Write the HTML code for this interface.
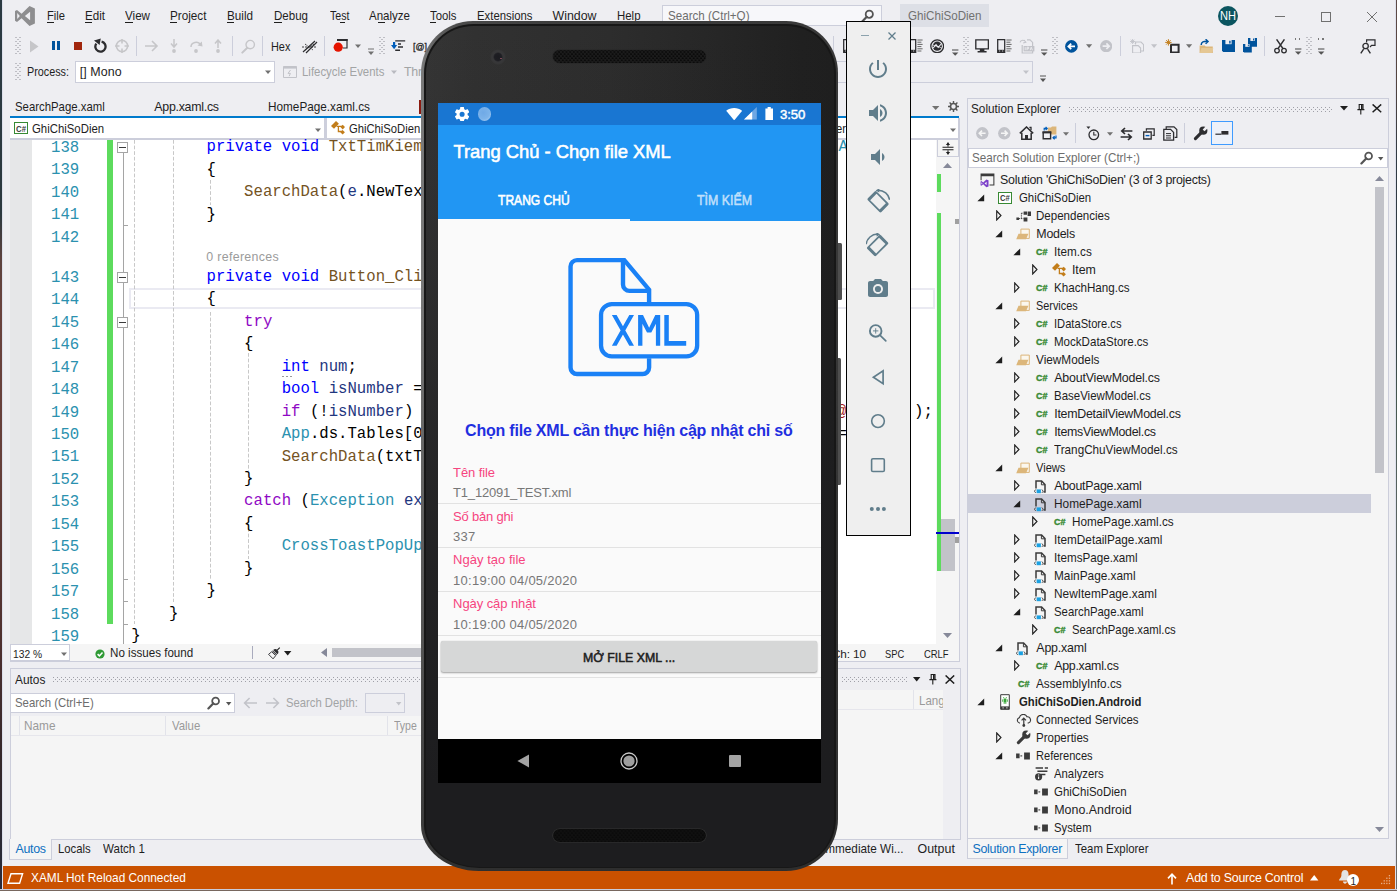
<!DOCTYPE html>
<html><head><meta charset="utf-8"><title>VS</title><style>
html,body{margin:0;padding:0}
body{width:1397px;height:891px;overflow:hidden;position:relative;background:#EEEEF2;font-family:"Liberation Sans",sans-serif;}
#r,#r div,#r span,#r svg{position:absolute}
#r{left:0;top:0;width:1397px;height:891px;overflow:hidden}
#r span{white-space:pre}
#r div{box-sizing:border-box}
</style></head><body><div id="r">
<svg style="left:14px;top:5px;" width="22" height="22" viewBox="0 0 22 22"><path d="M15.5 1.1 L20.9 3.4 V18.6 L15.5 20.9 L7.6 13.3 L3 16.9 L1 15.8 V6.1 L3 5.05 L7.6 8.7 Z M16.1 6.85 L10.9 11 L16.1 15.3 Z M3.2 8.1 V14 L5.85 11 Z" fill="#8E8E90" fill-rule="evenodd"/></svg>
<span style="left:47px;top:10.00px;font-size:12.4px;line-height:12.4px;color:#1E1E1E;transform:scaleX(0.9014);transform-origin:0 0;">File</span>
<div style="left:47px;top:22px;width:7px;height:1px;background:#1E1E1E;"></div>
<span style="left:84.5px;top:10.00px;font-size:12.4px;line-height:12.4px;color:#1E1E1E;transform:scaleX(0.9364);transform-origin:0 0;">Edit</span>
<div style="left:84.5px;top:22px;width:7px;height:1px;background:#1E1E1E;"></div>
<span style="left:124.5px;top:10.00px;font-size:12.4px;line-height:12.4px;color:#1E1E1E;transform:scaleX(0.9384);transform-origin:0 0;">View</span>
<div style="left:124.5px;top:22px;width:8px;height:1px;background:#1E1E1E;"></div>
<span style="left:170px;top:10.00px;font-size:12.4px;line-height:12.4px;color:#1E1E1E;transform:scaleX(0.9461);transform-origin:0 0;">Project</span>
<div style="left:170px;top:22px;width:7px;height:1px;background:#1E1E1E;"></div>
<span style="left:227px;top:10.00px;font-size:12.4px;line-height:12.4px;color:#1E1E1E;transform:scaleX(0.9433);transform-origin:0 0;">Build</span>
<div style="left:227px;top:22px;width:7px;height:1px;background:#1E1E1E;"></div>
<span style="left:273.5px;top:10.00px;font-size:12.4px;line-height:12.4px;color:#1E1E1E;transform:scaleX(0.9311);transform-origin:0 0;">Debug</span>
<div style="left:273.5px;top:22px;width:8px;height:1px;background:#1E1E1E;"></div>
<span style="left:329.5px;top:10.00px;font-size:12.4px;line-height:12.4px;color:#1E1E1E;transform:scaleX(0.8577);transform-origin:0 0;">Test</span>
<div style="left:340px;top:22px;width:5px;height:1px;background:#1E1E1E;"></div>
<span style="left:369px;top:10.00px;font-size:12.4px;line-height:12.4px;color:#1E1E1E;transform:scaleX(0.9298);transform-origin:0 0;">Analyze</span>
<div style="left:377.5px;top:22px;width:7px;height:1px;background:#1E1E1E;"></div>
<span style="left:430px;top:10.00px;font-size:12.4px;line-height:12.4px;color:#1E1E1E;transform:scaleX(0.9158);transform-origin:0 0;">Tools</span>
<div style="left:430px;top:22px;width:6px;height:1px;background:#1E1E1E;"></div>
<span style="left:477px;top:10.00px;font-size:12.4px;line-height:12.4px;color:#1E1E1E;transform:scaleX(0.9155);transform-origin:0 0;">Extensions</span>
<span style="left:552.5px;top:10.00px;font-size:12.4px;line-height:12.4px;color:#1E1E1E;letter-spacing:-0.016px;">Window</span>
<span style="left:617px;top:10.00px;font-size:12.4px;line-height:12.4px;color:#1E1E1E;transform:scaleX(0.9221);transform-origin:0 0;">Help</span>
<div style="left:662px;top:5px;width:220px;height:21px;background:#F7F7FA;border:1px solid #CCCEDB;"></div>
<span style="left:668px;top:10.00px;font-size:12.4px;line-height:12.4px;color:#6D6D6D;transform:scaleX(0.9356);transform-origin:0 0;">Search (Ctrl+Q)</span>
<svg style="left:860px;top:9px;" width="15" height="15" viewBox="0 0 15 15"><circle cx="9.3" cy="5.2" r="3.6" fill="none" stroke="#555" stroke-width="1.8"/><path d="M6.8 7.8 L1.5 13.2" stroke="#555" stroke-width="2.2" stroke-linecap="round"/></svg>
<div style="left:899.5px;top:4px;width:89.5px;height:23px;background:#DDDFE6;"></div>
<span style="left:907.5px;top:10.00px;font-size:12.4px;line-height:12.4px;color:#717171;transform:scaleX(0.9361);transform-origin:0 0;">GhiChiSoDien</span>
<div style="left:1218px;top:5.7px;width:20px;height:20px;background:#0B5560;border-radius:50%;"></div>
<span style="left:1220px;top:10.00px;font-size:12.6px;line-height:12.6px;color:#FFFFFF;transform:scaleX(0.8790);transform-origin:0 0;">NH</span>
<div style="left:1275px;top:16px;width:10px;height:1px;background:#707070;"></div>
<div style="left:1321px;top:12px;width:10px;height:10px;background:transparent;border:1px solid #707070;"></div>
<svg style="left:1366px;top:11px;" width="12" height="12" viewBox="0 0 12 12"><path d="M1 1 L11 11 M11 1 L1 11" stroke="#707070" stroke-width="1"/></svg>
<svg style="left:15px;top:37px;" width="6" height="18" viewBox="0 0 6 18"><rect x="0.5" y="0" width="1" height="1" fill="#8E8E96"/><rect x="4.5" y="0" width="1" height="1" fill="#8E8E96"/><rect x="2.5" y="2" width="1" height="1" fill="#8E8E96"/><rect x="0.5" y="4" width="1" height="1" fill="#8E8E96"/><rect x="4.5" y="4" width="1" height="1" fill="#8E8E96"/><rect x="2.5" y="6" width="1" height="1" fill="#8E8E96"/><rect x="0.5" y="8" width="1" height="1" fill="#8E8E96"/><rect x="4.5" y="8" width="1" height="1" fill="#8E8E96"/><rect x="2.5" y="10" width="1" height="1" fill="#8E8E96"/><rect x="0.5" y="12" width="1" height="1" fill="#8E8E96"/><rect x="4.5" y="12" width="1" height="1" fill="#8E8E96"/><rect x="2.5" y="14" width="1" height="1" fill="#8E8E96"/><rect x="0.5" y="16" width="1" height="1" fill="#8E8E96"/><rect x="4.5" y="16" width="1" height="1" fill="#8E8E96"/></svg>
<svg style="left:29px;top:40px;" width="11" height="13" viewBox="0 0 11 13"><path d="M1 0.5 L9.5 6.5 L1 12.5 Z" fill="#C6C6C9"/></svg>
<div style="left:52px;top:41px;width:3px;height:9px;background:#00539C;"></div>
<div style="left:57px;top:41px;width:3px;height:9px;background:#00539C;"></div>
<div style="left:74px;top:42px;width:8px;height:8px;background:#A1260D;"></div>
<svg style="left:93px;top:38px;" width="14" height="16" viewBox="0 0 14 16"><path d="M3.3 5.6 A5.1 5.1 0 1 0 8.6 3.6" fill="none" stroke="#2D2D30" stroke-width="2.3"/><path d="M1 2.4 L7.8 0.4 L6.6 7 Z" fill="#2D2D30"/></svg>
<svg style="left:115px;top:39px;" width="14" height="14" viewBox="0 0 14 14"><circle cx="7" cy="7" r="5.6" fill="none" stroke="#C6C6C9" stroke-width="1.6"/><path d="M7 0 V4.5 M7 9.5 V14 M0 7 H4.5 M9.5 7 H14" stroke="#C6C6C9" stroke-width="1.6"/></svg>
<div style="left:136px;top:36px;width:1px;height:20px;background:#CCCEDB;"></div>
<svg style="left:144px;top:40px;" width="15" height="12" viewBox="0 0 15 12"><path d="M1 6 H13 M8 1 L13 6 L8 11" fill="none" stroke="#C6C6C9" stroke-width="1.6"/></svg>
<svg style="left:169px;top:39px;" width="10" height="15" viewBox="0 0 10 15"><path d="M5 0 V7 M2 4.5 L5 8 L8 4.5" fill="none" stroke="#C6C6C9" stroke-width="1.5"/><circle cx="5" cy="12" r="1.9" fill="#C6C6C9"/></svg>
<svg style="left:189px;top:39px;" width="14" height="15" viewBox="0 0 14 15"><path d="M2 8 A5 4.6 0 0 1 11.5 6" fill="none" stroke="#C6C6C9" stroke-width="1.5"/><path d="M8.5 6.5 L13.5 7.5 L12.8 2.5 Z" fill="#C6C6C9"/><circle cx="7" cy="12" r="1.9" fill="#C6C6C9"/></svg>
<svg style="left:213px;top:39px;" width="10" height="15" viewBox="0 0 10 15"><path d="M5 9 V1.5 M2 4.5 L5 1 L8 4.5" fill="none" stroke="#C6C6C9" stroke-width="1.5"/><circle cx="5" cy="12" r="1.9" fill="#C6C6C9"/></svg>
<div style="left:232px;top:36px;width:1px;height:20px;background:#CCCEDB;"></div>
<svg style="left:241px;top:39px;" width="15" height="15" viewBox="0 0 15 15"><circle cx="9.2" cy="5.6" r="4.2" fill="none" stroke="#C6C6C9" stroke-width="1.4"/><path d="M6.3 8.8 L1.3 13.6" stroke="#C6C6C9" stroke-width="2" stroke-linecap="round"/></svg>
<div style="left:262px;top:36px;width:1px;height:20px;background:#CCCEDB;"></div>
<span style="left:270.6px;top:41.00px;font-size:12.4px;line-height:12.4px;color:#1E1E1E;transform:scaleX(0.8799);transform-origin:0 0;">Hex</span>
<svg style="left:301px;top:39px;" width="17" height="15" viewBox="0 0 17 15"><path d="M2 13 L14 2 M5 14 L16 3" stroke="#2D2D30" stroke-width="1.2"/><path d="M1 8 H15 M4 5 L12 11 M4 11 L13 5" stroke="#2D2D30" stroke-width="0.9" stroke-dasharray="2 1"/></svg>
<div style="left:324px;top:36px;width:1px;height:20px;background:#CCCEDB;"></div>
<svg style="left:333px;top:38px;" width="16" height="14" viewBox="0 0 16 14"><path d="M4 1.5 H14 V10 H10" fill="none" stroke="#2D2D30" stroke-width="1.2"/><path d="M4 1 H14.6 V3 H4 Z" fill="#2D2D30"/><circle cx="5.2" cy="9.2" r="4.6" fill="#E51400"/></svg>
<svg style="left:355px;top:44px;" width="7" height="5" viewBox="0 0 7 5"><path d="M0 0.5 H6 L3 4 Z" fill="#717171"/></svg>
<svg style="left:368px;top:48px;" width="7" height="8" viewBox="0 0 7 8"><path d="M0 1 H6" stroke="#717171" stroke-width="1"/><path d="M0 3.5 H6 L3 7 Z" fill="#717171"/></svg>
<svg style="left:379px;top:37px;" width="6" height="18" viewBox="0 0 6 18"><rect x="0.5" y="0" width="1" height="1" fill="#8E8E96"/><rect x="4.5" y="0" width="1" height="1" fill="#8E8E96"/><rect x="2.5" y="2" width="1" height="1" fill="#8E8E96"/><rect x="0.5" y="4" width="1" height="1" fill="#8E8E96"/><rect x="4.5" y="4" width="1" height="1" fill="#8E8E96"/><rect x="2.5" y="6" width="1" height="1" fill="#8E8E96"/><rect x="0.5" y="8" width="1" height="1" fill="#8E8E96"/><rect x="4.5" y="8" width="1" height="1" fill="#8E8E96"/><rect x="2.5" y="10" width="1" height="1" fill="#8E8E96"/><rect x="0.5" y="12" width="1" height="1" fill="#8E8E96"/><rect x="4.5" y="12" width="1" height="1" fill="#8E8E96"/><rect x="2.5" y="14" width="1" height="1" fill="#8E8E96"/><rect x="0.5" y="16" width="1" height="1" fill="#8E8E96"/><rect x="4.5" y="16" width="1" height="1" fill="#8E8E96"/></svg>
<svg style="left:390px;top:39px;" width="16" height="13" viewBox="0 0 16 13"><path d="M4.1 3 V7" stroke="#005DBA" stroke-width="2.2"/><path d="M1 6 L4.1 10.2 L7.2 6 Z" fill="#005DBA"/><path d="M5.2 1.9 H15.2 M8 5 H11 M8 8 H13 M5.2 11.2 H10" stroke="#2D2D30" stroke-width="1.4"/></svg>
<span style="left:413px;top:42.00px;font-size:9.4px;line-height:9.4px;color:#1E1E1E;transform:scaleX(0.9502);transform-origin:0 0;-webkit-text-stroke:0.3px #1E1E1E;">[@]</span>
<svg style="left:15px;top:63px;" width="6" height="18" viewBox="0 0 6 18"><rect x="0.5" y="0" width="1" height="1" fill="#8E8E96"/><rect x="4.5" y="0" width="1" height="1" fill="#8E8E96"/><rect x="2.5" y="2" width="1" height="1" fill="#8E8E96"/><rect x="0.5" y="4" width="1" height="1" fill="#8E8E96"/><rect x="4.5" y="4" width="1" height="1" fill="#8E8E96"/><rect x="2.5" y="6" width="1" height="1" fill="#8E8E96"/><rect x="0.5" y="8" width="1" height="1" fill="#8E8E96"/><rect x="4.5" y="8" width="1" height="1" fill="#8E8E96"/><rect x="2.5" y="10" width="1" height="1" fill="#8E8E96"/><rect x="0.5" y="12" width="1" height="1" fill="#8E8E96"/><rect x="4.5" y="12" width="1" height="1" fill="#8E8E96"/><rect x="2.5" y="14" width="1" height="1" fill="#8E8E96"/><rect x="0.5" y="16" width="1" height="1" fill="#8E8E96"/><rect x="4.5" y="16" width="1" height="1" fill="#8E8E96"/></svg>
<span style="left:26.5px;top:66.00px;font-size:12.4px;line-height:12.4px;color:#1E1E1E;transform:scaleX(0.8713);transform-origin:0 0;">Process:</span>
<div style="left:75px;top:61px;width:199.5px;height:21.5px;background:#FFFFFF;border:1px solid #CCCEDB;"></div>
<span style="left:79.8px;top:66.00px;font-size:12.4px;line-height:12.4px;color:#1E1E1E;letter-spacing:0.079px;">[] Mono</span>
<svg style="left:264.5px;top:70px;" width="7" height="5" viewBox="0 0 7 5"><path d="M0 0.5 H6 L3 4 Z" fill="#717171"/></svg>
<svg style="left:283px;top:66px;" width="14" height="12" viewBox="0 0 14 12"><path d="M0.5 0.5 H13.5 V11.5 H0.5 Z" fill="none" stroke="#C2C3C9" stroke-width="1"/><path d="M0.5 0.5 H13.5 V2.6 H0.5 Z" fill="#C2C3C9"/><path d="M7.5 4 L5 7.4 H7.4 L6.2 10.2" fill="none" stroke="#C2C3C9" stroke-width="1"/></svg>
<span style="left:302.4px;top:66.00px;font-size:12.4px;line-height:12.4px;color:#A2A4A5;transform:scaleX(0.9203);transform-origin:0 0;">Lifecycle Events</span>
<svg style="left:391px;top:70px;" width="7" height="5" viewBox="0 0 7 5"><path d="M0 0.5 H6 L3 4 Z" fill="#B9BAC0"/></svg>
<span style="left:404px;top:66.00px;font-size:12.4px;line-height:12.4px;color:#A2A4A5;letter-spacing:-0.284px;">Thread:</span>
<div style="left:700px;top:61.2px;width:333px;height:21.6px;background:#EEEEF2;border:1px solid #CCCEDB;"></div>
<svg style="left:1023px;top:70.2px;" width="7" height="5" viewBox="0 0 7 5"><path d="M0 0.5 H6 L3 4 Z" fill="#C2C3C9"/></svg>
<svg style="left:1040px;top:74.6px;" width="7" height="8" viewBox="0 0 7 8"><path d="M0 1 H6" stroke="#555" stroke-width="1"/><path d="M0 3.5 H6 L3 7 Z" fill="#555"/></svg>
<svg style="left:842.6px;top:39px;" width="15" height="14" viewBox="0 0 15 14"><path d="M0.7 0.7 H7.7 V13.3 H0.7 Z" fill="none" stroke="#2D2D30" stroke-width="1.25"/><path d="M0.7 10.8 H7.7 V13.3 H0.7 Z" fill="#2D2D30"/><path d="M2 12 H3.2 M5 12 H6.2" stroke="#EEEEF2" stroke-width="0.8"/><path d="M9.4 1 H14.6 M9.4 3.2 H13.4 M9.4 5.4 H14.6 M9.4 7.6 H13.4 M9.4 9.8 H14.6 M9.4 12 H13.4" stroke="#555" stroke-width="0.9"/></svg>
<div style="left:833px;top:36px;width:1px;height:20px;background:#CCCEDB;"></div>
<svg style="left:907.5px;top:39px;" width="15" height="14" viewBox="0 0 15 14"><path d="M0.7 0.7 H7.7 V13.3 H0.7 Z" fill="none" stroke="#2D2D30" stroke-width="1.25"/><path d="M0.7 10.8 H7.7 V13.3 H0.7 Z" fill="#2D2D30"/><path d="M2 12 H3.2 M5 12 H6.2" stroke="#EEEEF2" stroke-width="0.8"/><path d="M9.4 1 H14.6 M9.4 3.2 H13.4 M9.4 5.4 H14.6 M9.4 7.6 H13.4 M9.4 9.8 H14.6 M9.4 12 H13.4" stroke="#555" stroke-width="0.9"/></svg>
<svg style="left:930px;top:39px;" width="14.4" height="14.4" viewBox="0 0 14.4 14.4"><circle cx="7.2" cy="7.2" r="6.4" fill="none" stroke="#2D2D30" stroke-width="1.3"/><circle cx="7.2" cy="7.2" r="4.6" fill="#2D2D30"/><path d="M3.2 9 L6 5.6 L8.2 8.4 L11.2 5" fill="none" stroke="#EEEEF2" stroke-width="1.1"/><path d="M2.8 6 L11.6 8.8" stroke="#EEEEF2" stroke-width="0.7"/></svg>
<svg style="left:952px;top:48.6px;" width="7" height="8" viewBox="0 0 7 8"><path d="M0 1 H6.4" stroke="#555" stroke-width="1.1"/><path d="M0 3.4 H6.4 L3.2 6.8 Z" fill="#555"/></svg>
<svg style="left:963px;top:37px;" width="6" height="18" viewBox="0 0 6 18"><rect x="0.5" y="0" width="1" height="1" fill="#8E8E96"/><rect x="4.5" y="0" width="1" height="1" fill="#8E8E96"/><rect x="2.5" y="2" width="1" height="1" fill="#8E8E96"/><rect x="0.5" y="4" width="1" height="1" fill="#8E8E96"/><rect x="4.5" y="4" width="1" height="1" fill="#8E8E96"/><rect x="2.5" y="6" width="1" height="1" fill="#8E8E96"/><rect x="0.5" y="8" width="1" height="1" fill="#8E8E96"/><rect x="4.5" y="8" width="1" height="1" fill="#8E8E96"/><rect x="2.5" y="10" width="1" height="1" fill="#8E8E96"/><rect x="0.5" y="12" width="1" height="1" fill="#8E8E96"/><rect x="4.5" y="12" width="1" height="1" fill="#8E8E96"/><rect x="2.5" y="14" width="1" height="1" fill="#8E8E96"/><rect x="0.5" y="16" width="1" height="1" fill="#8E8E96"/><rect x="4.5" y="16" width="1" height="1" fill="#8E8E96"/></svg>
<svg style="left:975px;top:39px;" width="14.4" height="14" viewBox="0 0 14.4 14"><path d="M0.8 0.8 H13.4 V9.9 H0.8 Z" fill="none" stroke="#2D2D30" stroke-width="1.35"/><path d="M4.8 10 H9.4 V12 H4.8 Z M2.6 12 H11.6 V13.6 H2.6 Z" fill="#2D2D30"/></svg>
<svg style="left:997px;top:39px;" width="15" height="14" viewBox="0 0 15 14"><path d="M0.7 0.7 H7.7 V13.3 H0.7 Z" fill="none" stroke="#2D2D30" stroke-width="1.25"/><path d="M0.7 10.8 H7.7 V13.3 H0.7 Z" fill="#2D2D30"/><path d="M2 12 H3.2 M5 12 H6.2" stroke="#EEEEF2" stroke-width="0.8"/><path d="M9.4 1 H14.6 M9.4 3.2 H13.4 M9.4 5.4 H14.6 M9.4 7.6 H13.4 M9.4 9.8 H14.6 M9.4 12 H13.4" stroke="#555" stroke-width="0.9"/></svg>
<svg style="left:1019px;top:38.6px;" width="16" height="15" viewBox="0 0 16 15"><path d="M3.2 6 V14 H13.6 V3.4 L11 0.8 H8" fill="none" stroke="#C2C3C9" stroke-width="1.2"/><path d="M1 3.4 A3 3 0 0 1 6.6 3 M5 1 L6.8 3.2 L4.2 4" fill="none" stroke="#C2C3C9" stroke-width="1.1"/><path d="M4.6 7 H15.4 V12.4 H4.6 Z" fill="#C2C3C9"/><path d="M6.2 8.2 V11.2 M8 11.2 V8.2 H9.6 V9.8 H8 M11.2 11.2 L12.2 8.2 L13.4 11.2" fill="none" stroke="#EEEEF2" stroke-width="0.9"/></svg>
<svg style="left:1040.7px;top:48.6px;" width="7" height="8" viewBox="0 0 7 8"><path d="M0 1 H6.4" stroke="#555" stroke-width="1.1"/><path d="M0 3.4 H6.4 L3.2 6.8 Z" fill="#555"/></svg>
<svg style="left:1052px;top:37px;" width="6" height="18" viewBox="0 0 6 18"><rect x="0.5" y="0" width="1" height="1" fill="#8E8E96"/><rect x="4.5" y="0" width="1" height="1" fill="#8E8E96"/><rect x="2.5" y="2" width="1" height="1" fill="#8E8E96"/><rect x="0.5" y="4" width="1" height="1" fill="#8E8E96"/><rect x="4.5" y="4" width="1" height="1" fill="#8E8E96"/><rect x="2.5" y="6" width="1" height="1" fill="#8E8E96"/><rect x="0.5" y="8" width="1" height="1" fill="#8E8E96"/><rect x="4.5" y="8" width="1" height="1" fill="#8E8E96"/><rect x="2.5" y="10" width="1" height="1" fill="#8E8E96"/><rect x="0.5" y="12" width="1" height="1" fill="#8E8E96"/><rect x="4.5" y="12" width="1" height="1" fill="#8E8E96"/><rect x="2.5" y="14" width="1" height="1" fill="#8E8E96"/><rect x="0.5" y="16" width="1" height="1" fill="#8E8E96"/><rect x="4.5" y="16" width="1" height="1" fill="#8E8E96"/></svg>
<svg style="left:1065.4px;top:39.6px;" width="13" height="13" viewBox="0 0 13 13"><circle cx="6.4" cy="6.4" r="6.3" fill="#00539C"/><path d="M10 6.4 H3.6 M6.2 3.6 L3.4 6.4 L6.2 9.2" fill="none" stroke="#FFFFFF" stroke-width="1.8"/></svg>
<svg style="left:1085.8px;top:44.2px;" width="7" height="5" viewBox="0 0 7 5"><path d="M0 0.3 H6.2 L3.1 3.9 Z" fill="#717171"/></svg>
<svg style="left:1099.8px;top:39.8px;" width="12.6" height="12.6" viewBox="0 0 12.6 12.6"><circle cx="6.2" cy="6.2" r="6.1" fill="#C2C3C9"/><path d="M2.6 6.2 H9 M6.4 3.4 L9.2 6.2 L6.4 9" fill="none" stroke="#EEEEF2" stroke-width="1.7"/></svg>
<div style="left:1120px;top:36px;width:1px;height:20px;background:#CCCEDB;"></div>
<svg style="left:1129.6px;top:38.6px;" width="14.4" height="14.6" viewBox="0 0 14.4 14.6"><path d="M5.6 5.6 V3 H11 L13.6 5.6 V12 H11" fill="none" stroke="#C2C3C9" stroke-width="1.1"/><path d="M2.6 6.6 H8.2 L10.6 9 V14 H2.6 Z" fill="none" stroke="#C2C3C9" stroke-width="1.1"/><path d="M2.6 0 V5 M0 2.5 H5.2 M0.8 0.7 L4.4 4.3 M4.4 0.7 L0.8 4.3" stroke="#C2C3C9" stroke-width="0.9"/></svg>
<svg style="left:1151px;top:44.2px;" width="7" height="5" viewBox="0 0 7 5"><path d="M0 0.3 H6.2 L3.1 3.9 Z" fill="#C2C3C9"/></svg>
<svg style="left:1164.6px;top:38.6px;" width="15" height="14.6" viewBox="0 0 15 14.6"><path d="M6 5.8 H13.6 V13.6 H6 Z" fill="none" stroke="#2D2D30" stroke-width="2"/><path d="M3.4 0.2 V6.6 M0.2 3.4 H6.6 M1.2 1.2 L5.6 5.6 M5.6 1.2 L1.2 5.6" stroke="#C27D1A" stroke-width="1"/></svg>
<svg style="left:1186px;top:44.2px;" width="7" height="5" viewBox="0 0 7 5"><path d="M0 0.3 H6.2 L3.1 3.9 Z" fill="#717171"/></svg>
<svg style="left:1198.6px;top:39px;" width="15" height="15" viewBox="0 0 15 15"><path d="M0.6 6.4 H5.6 L6.8 7.6 H13.8 V14 H0.6 Z" fill="#DCB67A"/><path d="M2.4 9 H14.4 L12.8 14 H0.8 Z" fill="#E8CFA0" opacity="0.7"/><path d="M2.2 6 C2.2 2.6 4.6 2.2 8.6 2.4 M6.6 0.2 L9 2.4 L6.6 4.8" fill="none" stroke="#00539C" stroke-width="1.5"/></svg>
<svg style="left:1221.6px;top:39.8px;" width="13.0" height="12.4" viewBox="0 0 13 12.4"><path d="M0 0 H13 V12.4 H1.6 L0 10.8 Z" fill="#00539C"/><path d="M3.4 0 H9.6 V4.2 H3.4 Z" fill="#EEEEF2"/><path d="M7.2 0.8 H8.6 V3.4 H7.2 Z" fill="#00539C"/></svg>
<svg style="left:1248.4px;top:38.2px;" width="9.1" height="8.7" viewBox="0 0 13 12.4"><path d="M0 0 H13 V12.4 H1.6 L0 10.8 Z" fill="#00539C"/><path d="M3.4 0 H9.6 V4.2 H3.4 Z" fill="#EEEEF2"/><path d="M7.2 0.8 H8.6 V3.4 H7.2 Z" fill="#00539C"/></svg>
<svg style="left:1243px;top:44.4px;" width="8.8" height="8.4" viewBox="0 0 13 12.4"><path d="M0 0 H13 V12.4 H1.6 L0 10.8 Z" fill="#00539C"/><path d="M3.4 0 H9.6 V4.2 H3.4 Z" fill="#EEEEF2"/><path d="M7.2 0.8 H8.6 V3.4 H7.2 Z" fill="#00539C"/></svg>
<div style="left:1264px;top:36px;width:1px;height:20px;background:#CCCEDB;"></div>
<svg style="left:1273.6px;top:38.8px;" width="13" height="15" viewBox="0 0 13 15"><path d="M2.6 0.4 L9 9.6 M10.4 0.4 L4 9.6" stroke="#2D2D30" stroke-width="1.5"/><circle cx="3" cy="11.6" r="2.3" fill="none" stroke="#2D2D30" stroke-width="1.3"/><circle cx="10" cy="11.6" r="2.3" fill="none" stroke="#2D2D30" stroke-width="1.3"/></svg>
<svg style="left:1294.6px;top:48.4px;" width="7" height="8" viewBox="0 0 7 8"><path d="M0 1 H6.4" stroke="#555" stroke-width="1.1"/><path d="M0 3.4 H6.4 L3.2 6.8 Z" fill="#555"/></svg>
<div style="left:1295.0px;top:38.4px;width:1.2px;height:1.6px;background:#777;"></div>
<div style="left:1299.1999999999998px;top:38.4px;width:1.2px;height:1.6px;background:#777;"></div>
<svg style="left:1305.8px;top:37px;" width="6" height="18" viewBox="0 0 6 18"><rect x="0.5" y="0" width="1" height="1" fill="#8E8E96"/><rect x="4.5" y="0" width="1" height="1" fill="#8E8E96"/><rect x="2.5" y="2" width="1" height="1" fill="#8E8E96"/><rect x="0.5" y="4" width="1" height="1" fill="#8E8E96"/><rect x="4.5" y="4" width="1" height="1" fill="#8E8E96"/><rect x="2.5" y="6" width="1" height="1" fill="#8E8E96"/><rect x="0.5" y="8" width="1" height="1" fill="#8E8E96"/><rect x="4.5" y="8" width="1" height="1" fill="#8E8E96"/><rect x="2.5" y="10" width="1" height="1" fill="#8E8E96"/><rect x="0.5" y="12" width="1" height="1" fill="#8E8E96"/><rect x="4.5" y="12" width="1" height="1" fill="#8E8E96"/><rect x="2.5" y="14" width="1" height="1" fill="#8E8E96"/><rect x="0.5" y="16" width="1" height="1" fill="#8E8E96"/><rect x="4.5" y="16" width="1" height="1" fill="#8E8E96"/></svg>
<svg style="left:1317.8px;top:48.4px;" width="7" height="8" viewBox="0 0 7 8"><path d="M0 1 H6.4" stroke="#555" stroke-width="1.1"/><path d="M0 3.4 H6.4 L3.2 6.8 Z" fill="#555"/></svg>
<div style="left:1318.2px;top:38.4px;width:1.2px;height:1.6px;background:#777;"></div>
<div style="left:1322.3999999999999px;top:38.4px;width:1.2px;height:1.6px;background:#777;"></div>
<svg style="left:1359.6px;top:38.6px;" width="16" height="15" viewBox="0 0 16 15"><path d="M6.6 3.6 V0.8 H15 V6.4 H11.6 L10 8" fill="none" stroke="#2D2D30" stroke-width="1.2"/><circle cx="5.6" cy="7" r="2.7" fill="none" stroke="#2D2D30" stroke-width="1.3"/><path d="M0.8 14.4 L3.6 10.2 M10.4 14.4 L7.6 10.2" stroke="#2D2D30" stroke-width="1.4"/></svg>
<span style="left:15px;top:101.00px;font-size:12.4px;line-height:12.4px;color:#1E1E1E;transform:scaleX(0.9171);transform-origin:0 0;">SearchPage.xaml</span>
<span style="left:154.3px;top:101.00px;font-size:12.4px;line-height:12.4px;color:#1E1E1E;letter-spacing:-0.278px;">App.xaml.cs</span>
<span style="left:268px;top:101.00px;font-size:12.4px;line-height:12.4px;color:#1E1E1E;transform:scaleX(0.9494);transform-origin:0 0;">HomePage.xaml.cs</span>
<div style="left:419.4px;top:100px;width:1.8px;height:14px;background:#8B1A10;"></div>
<svg style="left:931.5px;top:106px;" width="8" height="5" viewBox="0 0 8 5"><path d="M0 0 H7.4 L3.7 4 Z" fill="#717171"/></svg>
<svg style="left:947.5px;top:101px;" width="11" height="11" viewBox="0 0 11 11"><circle cx="5.5" cy="5.5" r="3" fill="none" stroke="#555" stroke-width="1.6"/><path d="M5.5 0 V2 M5.5 9 V11 M0 5.5 H2 M9 5.5 H11 M1.6 1.6 L3 3 M8 8 L9.4 9.4 M1.6 9.4 L3 8 M8 3 L9.4 1.6" stroke="#555" stroke-width="1.4"/></svg>
<div style="left:10px;top:116px;width:949px;height:2px;background:#007ACC;"></div>
<div style="left:10px;top:118px;width:949px;height:20.5px;background:#FFFFFF;"></div>
<div style="left:10px;top:138px;width:949px;height:1.6px;background:#CCCEDB;"></div>
<div style="left:323.6px;top:118px;width:3.8px;height:20px;background:#CDCFDC;"></div>
<div style="left:958px;top:118px;width:1.5px;height:21px;background:#CCCEDB;"></div>
<div style="left:14.2px;top:122.2px;width:14px;height:11.6px;background:#FFFFFF;border:1px solid #388A34;"></div>
<span style="left:16.4px;top:125.00px;font-size:8.6px;line-height:8.6px;color:#3A3A3A;font-weight:700;transform:scaleX(0.9091);transform-origin:0 0;">C#</span>
<span style="left:31.5px;top:123.00px;font-size:12.4px;line-height:12.4px;color:#1E1E1E;transform:scaleX(0.9183);transform-origin:0 0;">GhiChiSoDien</span>
<svg style="left:315.2px;top:127.6px;" width="7" height="5" viewBox="0 0 7 5"><path d="M0 0.5 H6 L3 4 Z" fill="#717171"/></svg>
<svg style="left:330px;top:120px;" width="16" height="16" viewBox="0 0 16 16"><path d="M1 5.9 L6 0.9 L8.9 3.8 L4 8.8 Z" fill="#C27D1A"/><path d="M6.6 6.3 H12.6 M8.4 6.3 V11.5 H12.6" fill="none" stroke="#C27D1A" stroke-width="1.3"/><path d="M10.4 7.1 L12.7 4.8 L15 7.1 L12.7 9.4 Z M10.3 12.3 L12.6 10 L14.9 12.3 L12.6 14.6 Z" fill="#C27D1A"/></svg>
<span style="left:349px;top:123.00px;font-size:12.4px;line-height:12.4px;color:#1E1E1E;transform:scaleX(0.9072);transform-origin:0 0;">GhiChiSoDien.Views.Sear</span>
<svg style="left:950px;top:127.5px;" width="7" height="5" viewBox="0 0 7 5"><path d="M0 0.5 H6 L3 4 Z" fill="#717171"/></svg>
<span style="left:836px;top:123.00px;font-size:12.4px;line-height:12.4px;color:#1E1E1E;transform:scaleX(0.9065);transform-origin:0 0;">er</span>
<div style="left:10px;top:139.5px;width:926px;height:504.5px;background:#FFFFFF;"></div>
<div style="left:10px;top:139.5px;width:22.3px;height:504.5px;background:#E6E7E8;"></div>
<div style="left:936px;top:139.5px;width:23px;height:504.5px;background:#F5F5F5;"></div>
<div style="left:959px;top:118px;width:1px;height:544px;background:#CCCEDB;"></div>
<div style="left:936.5px;top:139.5px;width:22.5px;height:17px;background:#F5F5F5;border:1px solid #CCCEDB;border-top:none;"></div>
<svg style="left:942px;top:142px;" width="12" height="13" viewBox="0 0 12 13"><path d="M6 0.5 V4.6 M6 8.4 V12.5 M0.5 5.2 H11.5 M0.5 7.8 H11.5" stroke="#1E1E1E" stroke-width="1.1"/><path d="M3.8 3 L6 0.4 L8.2 3 Z M3.8 10 L6 12.6 L8.2 10 Z" fill="#1E1E1E"/></svg>
<svg style="left:943px;top:163px;" width="9" height="5" viewBox="0 0 9 5"><path d="M0 5 L4.5 0 L9 5 Z" fill="#868999"/></svg>
<svg style="left:943px;top:633px;" width="9" height="5" viewBox="0 0 9 5"><path d="M0 0 L4.5 5 L9 0 Z" fill="#868999"/></svg>
<div style="left:937px;top:174px;width:4.2px;height:18px;background:#5DDB5D;"></div>
<div style="left:937px;top:213px;width:4.2px;height:358px;background:#5DDB5D;"></div>
<div style="left:941.2px;top:519px;width:13.4px;height:52px;background:#C2C3C9;"></div>
<div style="left:954.6px;top:537px;width:4.4px;height:5.6px;background:#A0A0A0;"></div>
<div style="left:936px;top:532px;width:23px;height:2px;background:#0000CD;"></div>
<div style="left:954.6px;top:218.6px;width:4.4px;height:5.6px;background:#A0A0A0;"></div>
<div style="left:107px;top:139.5px;width:6px;height:484.5px;background:#5DDB5D;"></div>
<span style="left:51px;top:141.00px;font-size:15.67px;line-height:15.67px;color:#2B91AF;font-family:'Liberation Mono', monospace;">138</span>
<span style="left:51px;top:163.00px;font-size:15.67px;line-height:15.67px;color:#2B91AF;font-family:'Liberation Mono', monospace;">139</span>
<span style="left:51px;top:186.00px;font-size:15.67px;line-height:15.67px;color:#2B91AF;font-family:'Liberation Mono', monospace;">140</span>
<span style="left:51px;top:208.00px;font-size:15.67px;line-height:15.67px;color:#2B91AF;font-family:'Liberation Mono', monospace;">141</span>
<span style="left:51px;top:231.00px;font-size:15.67px;line-height:15.67px;color:#2B91AF;font-family:'Liberation Mono', monospace;">142</span>
<span style="left:51px;top:271.00px;font-size:15.67px;line-height:15.67px;color:#2B91AF;font-family:'Liberation Mono', monospace;">143</span>
<span style="left:51px;top:293.00px;font-size:15.67px;line-height:15.67px;color:#2B91AF;font-family:'Liberation Mono', monospace;">144</span>
<span style="left:51px;top:316.00px;font-size:15.67px;line-height:15.67px;color:#2B91AF;font-family:'Liberation Mono', monospace;">145</span>
<span style="left:51px;top:338.00px;font-size:15.67px;line-height:15.67px;color:#2B91AF;font-family:'Liberation Mono', monospace;">146</span>
<span style="left:51px;top:361.00px;font-size:15.67px;line-height:15.67px;color:#2B91AF;font-family:'Liberation Mono', monospace;">147</span>
<span style="left:51px;top:383.00px;font-size:15.67px;line-height:15.67px;color:#2B91AF;font-family:'Liberation Mono', monospace;">148</span>
<span style="left:51px;top:406.00px;font-size:15.67px;line-height:15.67px;color:#2B91AF;font-family:'Liberation Mono', monospace;">149</span>
<span style="left:51px;top:428.00px;font-size:15.67px;line-height:15.67px;color:#2B91AF;font-family:'Liberation Mono', monospace;">150</span>
<span style="left:51px;top:450.00px;font-size:15.67px;line-height:15.67px;color:#2B91AF;font-family:'Liberation Mono', monospace;">151</span>
<span style="left:51px;top:473.00px;font-size:15.67px;line-height:15.67px;color:#2B91AF;font-family:'Liberation Mono', monospace;">152</span>
<span style="left:51px;top:495.00px;font-size:15.67px;line-height:15.67px;color:#2B91AF;font-family:'Liberation Mono', monospace;">153</span>
<span style="left:51px;top:518.00px;font-size:15.67px;line-height:15.67px;color:#2B91AF;font-family:'Liberation Mono', monospace;">154</span>
<span style="left:51px;top:540.00px;font-size:15.67px;line-height:15.67px;color:#2B91AF;font-family:'Liberation Mono', monospace;">155</span>
<span style="left:51px;top:563.00px;font-size:15.67px;line-height:15.67px;color:#2B91AF;font-family:'Liberation Mono', monospace;">156</span>
<span style="left:51px;top:585.00px;font-size:15.67px;line-height:15.67px;color:#2B91AF;font-family:'Liberation Mono', monospace;">157</span>
<span style="left:51px;top:608.00px;font-size:15.67px;line-height:15.67px;color:#2B91AF;font-family:'Liberation Mono', monospace;">158</span>
<span style="left:51px;top:630.00px;font-size:15.67px;line-height:15.67px;color:#2B91AF;font-family:'Liberation Mono', monospace;">159</span>
<div style="left:129px;top:288.3px;width:806px;height:20.6px;background:transparent;border:2px solid #EAEAF2;"></div>
<div style="left:122.6px;top:152px;width:1px;height:492px;background:#A5A5A5;"></div>
<div style="left:117px;top:142.2px;width:11px;height:11px;background:#FFFFFF;border:1px solid #A5A5A5;"></div>
<div style="left:119px;top:147.2px;width:7px;height:1px;background:#3B3B3B;"></div>
<div style="left:117px;top:272.0px;width:11px;height:11px;background:#FFFFFF;border:1px solid #A5A5A5;"></div>
<div style="left:119px;top:277.0px;width:7px;height:1px;background:#3B3B3B;"></div>
<div style="left:117px;top:316.9px;width:11px;height:11px;background:#FFFFFF;border:1px solid #A5A5A5;"></div>
<div style="left:119px;top:321.9px;width:7px;height:1px;background:#3B3B3B;"></div>
<div style="left:123px;top:224.5px;width:5px;height:1px;background:#A5A5A5;"></div>
<div style="left:123px;top:578.5px;width:5px;height:1px;background:#A5A5A5;"></div>
<div style="left:123px;top:601px;width:5px;height:1px;background:#A5A5A5;"></div>
<div style="left:123px;top:623.5px;width:5px;height:1px;background:#A5A5A5;"></div>
<div style="left:134px;top:139.5px;width:1px;height:484.5px;background:transparent;background-image:linear-gradient(#C8C8C8 60%,transparent 60%);background-size:1px 5.6px;"></div>
<div style="left:173px;top:139.5px;width:1px;height:462.5px;background:transparent;background-image:linear-gradient(#C8C8C8 60%,transparent 60%);background-size:1px 5.6px;"></div>
<div style="left:209.5px;top:180px;width:1px;height:25px;background:transparent;background-image:linear-gradient(#C8C8C8 60%,transparent 60%);background-size:1px 5.6px;"></div>
<div style="left:209.5px;top:312px;width:1px;height:268px;background:transparent;background-image:linear-gradient(#C8C8C8 60%,transparent 60%);background-size:1px 5.6px;"></div>
<div style="left:247.5px;top:353px;width:1px;height:118px;background:transparent;background-image:linear-gradient(#C8C8C8 60%,transparent 60%);background-size:1px 5.6px;"></div>
<div style="left:247.5px;top:528px;width:1px;height:31px;background:transparent;background-image:linear-gradient(#C8C8C8 60%,transparent 60%);background-size:1px 5.6px;"></div>
<span style="left:206.5px;top:140.00px;font-size:15.67px;line-height:15.67px;color:#0000FF;font-family:'Liberation Mono', monospace;">private</span>
<span style="left:281.7px;top:140.00px;font-size:15.67px;line-height:15.67px;color:#0000FF;font-family:'Liberation Mono', monospace;">void</span>
<span style="left:328.7px;top:140.00px;font-size:15.67px;line-height:15.67px;color:#74531F;font-family:'Liberation Mono', monospace;">TxtTimKiem_TextChanged</span>
<span style="left:206.5px;top:163.00px;font-size:15.67px;line-height:15.67px;color:#000000;font-family:'Liberation Mono', monospace;">{</span>
<span style="left:244.1px;top:185.00px;font-size:15.67px;line-height:15.67px;color:#74531F;font-family:'Liberation Mono', monospace;">SearchData</span>
<span style="left:338.1px;top:185.00px;font-size:15.67px;line-height:15.67px;color:#000000;font-family:'Liberation Mono', monospace;">(</span>
<span style="left:347.5px;top:185.00px;font-size:15.67px;line-height:15.67px;color:#1F377F;font-family:'Liberation Mono', monospace;">e</span>
<span style="left:356.9px;top:185.00px;font-size:15.67px;line-height:15.67px;color:#000000;font-family:'Liberation Mono', monospace;">.NewTextValue);</span>
<span style="left:206.5px;top:208.00px;font-size:15.67px;line-height:15.67px;color:#000000;font-family:'Liberation Mono', monospace;">}</span>
<span style="left:206.5px;top:270.00px;font-size:15.67px;line-height:15.67px;color:#0000FF;font-family:'Liberation Mono', monospace;">private</span>
<span style="left:281.7px;top:270.00px;font-size:15.67px;line-height:15.67px;color:#0000FF;font-family:'Liberation Mono', monospace;">void</span>
<span style="left:328.7px;top:270.00px;font-size:15.67px;line-height:15.67px;color:#74531F;font-family:'Liberation Mono', monospace;">Button_Clicked(</span>
<span style="left:206.5px;top:292.00px;font-size:15.67px;line-height:15.67px;color:#000000;font-family:'Liberation Mono', monospace;">{</span>
<span style="left:244.1px;top:315.00px;font-size:15.67px;line-height:15.67px;color:#8F08C4;font-family:'Liberation Mono', monospace;">try</span>
<span style="left:244.1px;top:337.00px;font-size:15.67px;line-height:15.67px;color:#000000;font-family:'Liberation Mono', monospace;">{</span>
<span style="left:281.7px;top:360.00px;font-size:15.67px;line-height:15.67px;color:#0000FF;font-family:'Liberation Mono', monospace;">int</span>
<span style="left:319.3px;top:360.00px;font-size:15.67px;line-height:15.67px;color:#1F377F;font-family:'Liberation Mono', monospace;">num</span>
<span style="left:347.5px;top:360.00px;font-size:15.67px;line-height:15.67px;color:#000000;font-family:'Liberation Mono', monospace;">;</span>
<span style="left:281.7px;top:382.00px;font-size:15.67px;line-height:15.67px;color:#0000FF;font-family:'Liberation Mono', monospace;">bool</span>
<span style="left:328.7px;top:382.00px;font-size:15.67px;line-height:15.67px;color:#1F377F;font-family:'Liberation Mono', monospace;">isNumber</span>
<span style="left:413.3px;top:382.00px;font-size:15.67px;line-height:15.67px;color:#000000;font-family:'Liberation Mono', monospace;">=</span>
<span style="left:432.1px;top:382.00px;font-size:15.67px;line-height:15.67px;color:#0000FF;font-family:'Liberation Mono', monospace;">int</span>
<span style="left:281.7px;top:405.00px;font-size:15.67px;line-height:15.67px;color:#8F08C4;font-family:'Liberation Mono', monospace;">if</span>
<span style="left:309.9px;top:405.00px;font-size:15.67px;line-height:15.67px;color:#000000;font-family:'Liberation Mono', monospace;">(!</span>
<span style="left:328.7px;top:405.00px;font-size:15.67px;line-height:15.67px;color:#1F377F;font-family:'Liberation Mono', monospace;">isNumber</span>
<span style="left:403.9px;top:405.00px;font-size:15.67px;line-height:15.67px;color:#000000;font-family:'Liberation Mono', monospace;">)</span>
<span style="left:281.7px;top:427.00px;font-size:15.67px;line-height:15.67px;color:#2B91AF;font-family:'Liberation Mono', monospace;">App</span>
<span style="left:309.9px;top:427.00px;font-size:15.67px;line-height:15.67px;color:#000000;font-family:'Liberation Mono', monospace;">.ds.Tables[</span>
<span style="left:413.3px;top:427.00px;font-size:15.67px;line-height:15.67px;color:#000000;font-family:'Liberation Mono', monospace;">0</span>
<span style="left:422.7px;top:427.00px;font-size:15.67px;line-height:15.67px;color:#000000;font-family:'Liberation Mono', monospace;">].</span>
<span style="left:281.7px;top:450.00px;font-size:15.67px;line-height:15.67px;color:#74531F;font-family:'Liberation Mono', monospace;">SearchData</span>
<span style="left:375.7px;top:450.00px;font-size:15.67px;line-height:15.67px;color:#000000;font-family:'Liberation Mono', monospace;">(txtTimKiem</span>
<span style="left:244.1px;top:472.00px;font-size:15.67px;line-height:15.67px;color:#000000;font-family:'Liberation Mono', monospace;">}</span>
<span style="left:244.1px;top:494.00px;font-size:15.67px;line-height:15.67px;color:#8F08C4;font-family:'Liberation Mono', monospace;">catch</span>
<span style="left:300.5px;top:494.00px;font-size:15.67px;line-height:15.67px;color:#000000;font-family:'Liberation Mono', monospace;">(</span>
<span style="left:309.9px;top:494.00px;font-size:15.67px;line-height:15.67px;color:#2B91AF;font-family:'Liberation Mono', monospace;">Exception</span>
<span style="left:403.9px;top:494.00px;font-size:15.67px;line-height:15.67px;color:#1F377F;font-family:'Liberation Mono', monospace;">ex</span>
<span style="left:422.7px;top:494.00px;font-size:15.67px;line-height:15.67px;color:#000000;font-family:'Liberation Mono', monospace;">)</span>
<span style="left:244.1px;top:517.00px;font-size:15.67px;line-height:15.67px;color:#000000;font-family:'Liberation Mono', monospace;">{</span>
<span style="left:281.7px;top:539.00px;font-size:15.67px;line-height:15.67px;color:#2B91AF;font-family:'Liberation Mono', monospace;">CrossToastPopUp</span>
<span style="left:422.7px;top:539.00px;font-size:15.67px;line-height:15.67px;color:#000000;font-family:'Liberation Mono', monospace;">.Current</span>
<span style="left:244.1px;top:562.00px;font-size:15.67px;line-height:15.67px;color:#000000;font-family:'Liberation Mono', monospace;">}</span>
<span style="left:206.5px;top:584.00px;font-size:15.67px;line-height:15.67px;color:#000000;font-family:'Liberation Mono', monospace;">}</span>
<span style="left:168.9px;top:607.00px;font-size:15.67px;line-height:15.67px;color:#000000;font-family:'Liberation Mono', monospace;">}</span>
<span style="left:131.3px;top:629.00px;font-size:15.67px;line-height:15.67px;color:#000000;font-family:'Liberation Mono', monospace;">}</span>
<div style="left:282px;top:375.5px;width:2px;height:1.4px;background:#9A9A9A;"></div>
<div style="left:286px;top:375.5px;width:2px;height:1.4px;background:#9A9A9A;"></div>
<div style="left:290px;top:375.5px;width:2px;height:1.4px;background:#9A9A9A;"></div>
<span style="left:206.3px;top:251.00px;font-size:12.4px;line-height:12.4px;color:#9B9B9B;letter-spacing:0.320px;">0 references</span>
<span style="left:838.5px;top:140.00px;font-size:15.67px;line-height:15.67px;color:#2B91AF;font-family:'Liberation Mono', monospace;">A</span>
<span style="left:914px;top:405.00px;font-size:15.67px;line-height:15.67px;color:#000000;font-family:'Liberation Mono', monospace;">);</span>
<span style="left:837px;top:405.00px;font-size:15.67px;line-height:15.67px;color:#A31515;font-family:'Liberation Mono', monospace;">@</span>
<span style="left:837.5px;top:427.00px;font-size:15.67px;line-height:15.67px;color:#000000;font-family:'Liberation Mono', monospace;">=</span>
<div style="left:10px;top:644px;width:949px;height:17.5px;background:#F5F5F5;"></div>
<div style="left:10px;top:661px;width:950px;height:1px;background:#CCCEDB;"></div>
<div style="left:10px;top:644px;width:59.5px;height:17px;background:#FFFFFF;border:1px solid #CCCEDB;"></div>
<span style="left:12.6px;top:648.00px;font-size:11.6px;line-height:11.6px;color:#1E1E1E;transform:scaleX(0.8852);transform-origin:0 0;">132 %</span>
<svg style="left:61px;top:651.5px;" width="7" height="5" viewBox="0 0 7 5"><path d="M0 0.5 H6 L3 4 Z" fill="#717171"/></svg>
<svg style="left:95px;top:648.5px;" width="10" height="10" viewBox="0 0 10 10"><circle cx="5" cy="5" r="4.6" fill="#2F9A35"/><path d="M2.6 5.1 L4.4 6.9 L7.5 3.4" fill="none" stroke="#FFF" stroke-width="1.5"/></svg>
<span style="left:110.2px;top:647.00px;font-size:12.2px;line-height:12.2px;color:#1E1E1E;transform:scaleX(0.9519);transform-origin:0 0;">No issues found</span>
<div style="left:252px;top:646px;width:1px;height:13px;background:#A9ABBD;"></div>
<svg style="left:266px;top:645px;" width="16" height="16" viewBox="0 0 16 16"><g transform="translate(8.8,7.6) rotate(45) scale(0.88)"><path d="M0 -8 V-4" stroke="#1E1E1E" stroke-width="1.2"/><path d="M-3.4 -0.8 A3.4 3.4 0 0 1 3.4 -0.8 Z" fill="#2D2D30"/><path d="M-3.4 0.4 H3.4" stroke="#2D2D30" stroke-width="1.1"/><path d="M-3.2 1.8 H3.2 L3.6 6.4 H-3.6 Z" fill="#F5F5F5" stroke="#2D2D30" stroke-width="1"/></g></svg>
<svg style="left:284px;top:651px;" width="8" height="5" viewBox="0 0 8 5"><path d="M0 0 H7.4 L3.7 4.4 Z" fill="#1E1E1E"/></svg>
<svg style="left:320.5px;top:648px;" width="6" height="9" viewBox="0 0 6 9"><path d="M6 0 V9 L0 4.5 Z" fill="#868999"/></svg>
<div style="left:331.8px;top:648px;width:500px;height:9px;background:#C2C3C9;"></div>
<span style="left:832px;top:649.00px;font-size:11.8px;line-height:11.8px;color:#1E1E1E;letter-spacing:-0.153px;">Ch: 10</span>
<span style="left:885px;top:649.00px;font-size:11.8px;line-height:11.8px;color:#1E1E1E;transform:scaleX(0.7912);transform-origin:0 0;">SPC</span>
<span style="left:924.4px;top:649.00px;font-size:11.8px;line-height:11.8px;color:#1E1E1E;transform:scaleX(0.7984);transform-origin:0 0;">CRLF</span>
<div style="left:10px;top:668px;width:951px;height:171.5px;background:#F5F5F5;border:1px solid #CCCEDB;"></div>
<div style="left:11px;top:669px;width:949px;height:21px;background:#EEEEF2;"></div>
<span style="left:14.5px;top:674.00px;font-size:12.4px;line-height:12.4px;color:#1E1E1E;transform:scaleX(0.9594);transform-origin:0 0;">Autos</span>
<div style="left:53px;top:677px;width:370px;height:5px;background:transparent;background-image:radial-gradient(circle at 0.5px 0.5px,#A0A0A8 0.55px,transparent 0.75px),radial-gradient(circle at 0.5px 0.5px,#A0A0A8 0.55px,transparent 0.75px);background-size:4px 4px,4px 4px;background-position:0 0,2px 2px;"></div>
<div style="left:842px;top:677px;width:66px;height:5px;background:transparent;background-image:radial-gradient(circle at 0.5px 0.5px,#A0A0A8 0.55px,transparent 0.75px),radial-gradient(circle at 0.5px 0.5px,#A0A0A8 0.55px,transparent 0.75px);background-size:4px 4px,4px 4px;background-position:0 0,2px 2px;"></div>
<svg style="left:912.5px;top:677px;" width="8" height="5" viewBox="0 0 8 5"><path d="M0 0 H7.4 L3.7 4.4 Z" fill="#1E1E1E"/></svg>
<svg style="left:929px;top:674px;" width="8" height="11" viewBox="0 0 8 11"><path d="M1.6 0.5 H6 V5.4 M2.2 0.5 V5.4 M0.4 5.6 H7.4 M3.8 5.6 V10.6" fill="none" stroke="#1E1E1E" stroke-width="1.1"/><path d="M4.8 0.5 V5.4" stroke="#1E1E1E" stroke-width="1.6"/></svg>
<svg style="left:944.5px;top:675px;" width="10" height="9" viewBox="0 0 10 9"><path d="M0.6 0.4 L9.2 8.6 M9.2 0.4 L0.6 8.6" stroke="#1E1E1E" stroke-width="1.4"/></svg>
<div style="left:11px;top:690px;width:420px;height:25.5px;background:#EEEEF2;"></div>
<div style="left:10.2px;top:692.6px;width:224.4px;height:20px;background:#FFFFFF;border:1px solid #CCCEDB;"></div>
<span style="left:15px;top:697.00px;font-size:12.4px;line-height:12.4px;color:#6D6D6D;transform:scaleX(0.9180);transform-origin:0 0;">Search (Ctrl+E)</span>
<svg style="left:207px;top:696px;" width="14" height="14" viewBox="0 0 14 14"><circle cx="8.6" cy="5" r="3.4" fill="none" stroke="#555" stroke-width="1.8"/><path d="M6.2 7.4 L1.4 12.4" stroke="#555" stroke-width="2.2" stroke-linecap="round"/></svg>
<svg style="left:225.5px;top:701.5px;" width="6" height="4" viewBox="0 0 6 4"><path d="M0 0 H5.4 L2.7 3.4 Z" fill="#555"/></svg>
<svg style="left:243px;top:697px;" width="15" height="12" viewBox="0 0 15 12"><path d="M14 6 H1.6 M6.6 1 L1.6 6 L6.6 11" fill="none" stroke="#C2C3C9" stroke-width="1.6"/></svg>
<svg style="left:264.5px;top:697px;" width="15" height="12" viewBox="0 0 15 12"><path d="M1 6 H13.4 M8.4 1 L13.4 6 L8.4 11" fill="none" stroke="#C2C3C9" stroke-width="1.6"/></svg>
<span style="left:286.3px;top:697.00px;font-size:12.4px;line-height:12.4px;color:#A2A4A5;transform:scaleX(0.9089);transform-origin:0 0;">Search Depth:</span>
<div style="left:365px;top:692.9px;width:39.7px;height:19.8px;background:#EEEEF2;border:1px solid #CCCEDB;"></div>
<svg style="left:395.5px;top:701.5px;" width="6" height="4" viewBox="0 0 6 4"><path d="M0 0 H5.4 L2.7 3.4 Z" fill="#C2C3C9"/></svg>
<div style="left:11px;top:715.5px;width:420px;height:19.5px;background:#F5F5F5;"></div>
<div style="left:11px;top:735px;width:420px;height:1px;background:#E6E6EC;"></div>
<div style="left:18.5px;top:716px;width:1px;height:19px;background:#E2E3EA;"></div>
<div style="left:165.4px;top:716px;width:1px;height:19px;background:#E2E3EA;"></div>
<div style="left:386.6px;top:716px;width:1px;height:19px;background:#E2E3EA;"></div>
<span style="left:24.4px;top:720.00px;font-size:12.4px;line-height:12.4px;color:#9A9A9A;transform:scaleX(0.9527);transform-origin:0 0;">Name</span>
<span style="left:171.7px;top:720.00px;font-size:12.4px;line-height:12.4px;color:#9A9A9A;transform:scaleX(0.9194);transform-origin:0 0;">Value</span>
<span style="left:393.7px;top:720.00px;font-size:12.4px;line-height:12.4px;color:#9A9A9A;transform:scaleX(0.8484);transform-origin:0 0;">Type</span>
<div style="left:838px;top:690px;width:122px;height:19.5px;background:#F5F5F5;"></div>
<div style="left:838px;top:709.3px;width:105px;height:1px;background:#E6E6EC;"></div>
<div style="left:913.4px;top:690px;width:1px;height:19px;background:#E2E3EA;"></div>
<span style="left:919.3px;top:695.00px;font-size:12.4px;line-height:12.4px;color:#9A9A9A;transform:scaleX(0.9319);transform-origin:0 0;">Lang</span>
<div style="left:942.7px;top:690px;width:17.3px;height:149px;background:#EEEEF2;"></div>
<div style="left:9px;top:838.5px;width:42.5px;height:21px;background:#F5F5F5;border:1px solid #CCCEDB;border-top:none;"></div>
<span style="left:15.4px;top:843.00px;font-size:12.4px;line-height:12.4px;color:#0E70C0;letter-spacing:-0.272px;">Autos</span>
<span style="left:58.3px;top:843.00px;font-size:12.4px;line-height:12.4px;color:#1E1E1E;transform:scaleX(0.9127);transform-origin:0 0;">Locals</span>
<span style="left:103px;top:843.00px;font-size:12.4px;line-height:12.4px;color:#1E1E1E;transform:scaleX(0.9311);transform-origin:0 0;">Watch 1</span>
<span style="left:821.6px;top:843.00px;font-size:12.4px;line-height:12.4px;color:#1E1E1E;transform:scaleX(0.9480);transform-origin:0 0;">Immediate Wi...</span>
<span style="left:917.5px;top:843.00px;font-size:12.4px;line-height:12.4px;color:#1E1E1E;letter-spacing:0.039px;">Output</span>
<div style="left:3px;top:866px;width:1392px;height:23px;background:#CA5100;"></div>
<svg style="left:7px;top:873px;" width="17" height="11" viewBox="0 0 17 11"><path d="M4 0.8 H15.6 L12.6 10.2 H1 Z" fill="none" stroke="#FFFFFF" stroke-width="1.4"/></svg>
<span style="left:30.7px;top:872.00px;font-size:12.4px;line-height:12.4px;color:#FFFFFF;transform:scaleX(0.9550);transform-origin:0 0;">XAML Hot Reload Connected</span>
<svg style="left:1167px;top:872.5px;" width="10" height="12" viewBox="0 0 10 12"><path d="M5 11.5 V1.6 M1 5.4 L5 1.2 L9 5.4" fill="none" stroke="#FFFFFF" stroke-width="1.6"/></svg>
<span style="left:1186.1px;top:872.00px;font-size:12.4px;line-height:12.4px;color:#FFFFFF;letter-spacing:-0.231px;">Add to Source Control</span>
<svg style="left:1310px;top:875px;" width="9" height="6" viewBox="0 0 9 6"><path d="M0 5.4 L4.2 0 L8.4 5.4 Z" fill="#FFFFFF"/></svg>
<svg style="left:1338px;top:869px;" width="14" height="16" viewBox="0 0 14 16"><path d="M7 1 C3.6 1 3.4 4.4 3.4 6.6 C3.4 9 1 9.6 1 11.4 H13 C13 9.6 10.6 9 10.6 6.6 C10.6 4.4 10.4 1 7 1 Z M5 12.6 H9 C9 15.4 5 15.4 5 12.6 Z" fill="#E3E3E3"/></svg>
<div style="left:1346.6px;top:874.2px;width:12px;height:12px;background:#FFFFFF;border-radius:50%;"></div>
<span style="left:1350.4px;top:877.00px;font-size:10px;line-height:10px;color:#1E1E1E;">1</span>
<svg style="left:1381px;top:875px;" width="11" height="11" viewBox="0 0 11 11"><rect x="0.0" y="7.800000000000001" width="1.3" height="1.3" fill="#E8B08A"/><rect x="2.6" y="5.2" width="1.3" height="1.3" fill="#E8B08A"/><rect x="2.6" y="7.800000000000001" width="1.3" height="1.3" fill="#E8B08A"/><rect x="5.2" y="2.6" width="1.3" height="1.3" fill="#E8B08A"/><rect x="5.2" y="5.2" width="1.3" height="1.3" fill="#E8B08A"/><rect x="5.2" y="7.800000000000001" width="1.3" height="1.3" fill="#E8B08A"/><rect x="7.800000000000001" y="0.0" width="1.3" height="1.3" fill="#E8B08A"/><rect x="7.800000000000001" y="2.6" width="1.3" height="1.3" fill="#E8B08A"/><rect x="7.800000000000001" y="5.2" width="1.3" height="1.3" fill="#E8B08A"/><rect x="7.800000000000001" y="7.800000000000001" width="1.3" height="1.3" fill="#E8B08A"/></svg>
<div style="left:966.5px;top:97.5px;width:422.5px;height:741.5px;background:#F5F5F5;border:1px solid #CCCEDB;"></div>
<div style="left:967.5px;top:98.5px;width:420.5px;height:49px;background:#EEEEF2;"></div>
<span style="left:971.3px;top:103.00px;font-size:12.4px;line-height:12.4px;color:#1E1E1E;transform:scaleX(0.9485);transform-origin:0 0;">Solution Explorer</span>
<div style="left:1069px;top:106.5px;width:263px;height:5px;background:transparent;background-image:radial-gradient(circle at 0.5px 0.5px,#A0A0A8 0.55px,transparent 0.75px),radial-gradient(circle at 0.5px 0.5px,#A0A0A8 0.55px,transparent 0.75px);background-size:4px 4px,4px 4px;background-position:0 0,2px 2px;"></div>
<svg style="left:1340px;top:106px;" width="9" height="5" viewBox="0 0 9 5"><path d="M0 0 H8 L4 4.4 Z" fill="#1E1E1E"/></svg>
<svg style="left:1357px;top:103.5px;" width="8" height="11" viewBox="0 0 8 11"><path d="M1.6 0.5 H6 V5.4 M2.2 0.5 V5.4 M0.4 5.6 H7.4 M3.8 5.6 V10.6" fill="none" stroke="#1E1E1E" stroke-width="1.1"/><path d="M4.8 0.5 V5.4" stroke="#1E1E1E" stroke-width="1.6"/></svg>
<svg style="left:1372px;top:104px;" width="10" height="9" viewBox="0 0 10 9"><path d="M0.6 0.4 L9.2 8.2 M9.2 0.4 L0.6 8.2" stroke="#1E1E1E" stroke-width="1.5"/></svg>
<svg style="left:976px;top:127px;" width="13" height="13" viewBox="0 0 13 13"><circle cx="6.3" cy="6.3" r="6.2" fill="#C2C3C9"/><path d="M9.6 6.3 H3.6 M6 3.6 L3.3 6.3 L6 9" fill="none" stroke="#F5F5F5" stroke-width="1.6"/></svg>
<svg style="left:998px;top:127px;" width="13" height="13" viewBox="0 0 13 13"><circle cx="6.3" cy="6.3" r="6.2" fill="#C2C3C9"/><path d="M3 6.3 H9 M6.6 3.6 L9.3 6.3 L6.6 9" fill="none" stroke="#F5F5F5" stroke-width="1.6"/></svg>
<svg style="left:1018.5px;top:125.5px;" width="15" height="14" viewBox="0 0 15 14"><path d="M0.8 7.4 L7.5 1 L14.2 7.4" fill="none" stroke="#2D2D30" stroke-width="1.5"/><path d="M2.8 6.8 V13.2 H12.2 V6.8" fill="none" stroke="#2D2D30" stroke-width="1.5"/><path d="M6 13 V9 H9 V13 Z" fill="#2D2D30"/><path d="M10.4 1.4 H12 V4" stroke="#2D2D30" stroke-width="1.3" fill="none"/></svg>
<svg style="left:1041.5px;top:125.5px;" width="16" height="15" viewBox="0 0 16 15"><path d="M5.8 1.6 H9 L10 0.4 H14.4 V8.4 H5.8 Z" fill="#DCB67A"/><path d="M1.2 6.2 H8.6 V12.8 H1.2 Z" fill="#F0F0F4" stroke="#2D2D30" stroke-width="1.4"/><path d="M0.5 5.4 H9.3 V7.4 H0.5 Z" fill="#2D2D30"/><path d="M2.2 4.6 V2.4 H4.6 M3.6 0.8 L5.2 2.4 L3.6 4" fill="none" stroke="#005DBA" stroke-width="1.2"/><path d="M14 9.6 V11.8 H11.4 M12.6 10.2 L11 11.8 L12.6 13.4" fill="none" stroke="#005DBA" stroke-width="1.2"/></svg>
<svg style="left:1063px;top:131.5px;" width="7" height="5" viewBox="0 0 7 5"><path d="M0 0.3 H6 L3 3.8 Z" fill="#717171"/></svg>
<div style="left:1075px;top:123px;width:1px;height:20px;background:#CCCEDB;"></div>
<svg style="left:1086px;top:125.5px;" width="15" height="15" viewBox="0 0 15 15"><circle cx="7.8" cy="8.8" r="4.8" fill="none" stroke="#2D2D30" stroke-width="1.3"/><path d="M7.8 5.8 V9 H10.4" fill="none" stroke="#2D2D30" stroke-width="1.1"/><path d="M0.4 0.6 H4.4 L2.4 3 Z" fill="#2D2D30"/></svg>
<svg style="left:1106.5px;top:131.5px;" width="7" height="5" viewBox="0 0 7 5"><path d="M0 0.3 H6 L3 3.8 Z" fill="#717171"/></svg>
<svg style="left:1119.5px;top:126.5px;" width="13" height="14" viewBox="0 0 13 14"><path d="M12.4 4 H2 M5 1 L1.8 4 L5 7" fill="none" stroke="#2D2D30" stroke-width="1.7"/><path d="M0.6 10 H11 M8 7 L11.2 10 L8 13" fill="none" stroke="#2D2D30" stroke-width="1.7"/></svg>
<svg style="left:1142.5px;top:127.5px;" width="12" height="12" viewBox="0 0 12 12"><path d="M3.4 2.8 V0.8 H11.2 V7.4 H9.4" fill="none" stroke="#2D2D30" stroke-width="1.2"/><path d="M0.7 4 H8.2 V11 H0.7 Z" fill="none" stroke="#2D2D30" stroke-width="1.3"/><path d="M2.6 7.6 H6.4" stroke="#005DBA" stroke-width="1.4"/></svg>
<svg style="left:1163px;top:125.5px;" width="15" height="15" viewBox="0 0 15 15"><path d="M3.2 3 V0.8 H11 L13.8 3.6 V11.4 H11.6" fill="none" stroke="#2D2D30" stroke-width="1.2"/><path d="M0.8 3.4 H7.6 L10.6 6.4 V14.2 H0.8 Z" fill="none" stroke="#2D2D30" stroke-width="1.3"/><path d="M3 7.6 H8 M3 9.8 H8 M3 12 H8" stroke="#2D2D30" stroke-width="1"/></svg>
<div style="left:1184px;top:123px;width:1px;height:20px;background:#CCCEDB;"></div>
<svg style="left:1192.5px;top:125.5px;" width="15" height="15" viewBox="0 0 15 15"><path d="M2.4 12.6 L8.6 6.4" stroke="#2D2D30" stroke-width="3.1" stroke-linecap="round"/><circle cx="10.3" cy="4.7" r="4.1" fill="#2D2D30"/><path d="M9.7 3.5 L11.5 5.3 L15.4 1.6 L13.4 -0.4 Z" fill="#EEEEF2"/></svg>
<div style="left:1211.2px;top:121.1px;width:21.8px;height:23.7px;background:#EDF1F9;border:1px solid #3F9BFF;"></div>
<svg style="left:1215px;top:130px;" width="14" height="6" viewBox="0 0 14 6"><path d="M0.4 4.2 H6.4" stroke="#2D2D30" stroke-width="1.2"/><path d="M6.4 1 H13.4 V4.6 H6.4 Z" fill="#2D2D30"/></svg>
<div style="left:967.5px;top:147.5px;width:420px;height:20.5px;background:#FFFFFF;border:1px solid #CCCEDB;"></div>
<span style="left:972.3px;top:152.00px;font-size:12.4px;line-height:12.4px;color:#6D6D6D;transform:scaleX(0.9401);transform-origin:0 0;">Search Solution Explorer (Ctrl+;)</span>
<svg style="left:1360px;top:151px;" width="14" height="14" viewBox="0 0 14 14"><circle cx="8.6" cy="5" r="3.4" fill="none" stroke="#555" stroke-width="1.8"/><path d="M6.2 7.4 L1.4 12.4" stroke="#555" stroke-width="2.2" stroke-linecap="round"/></svg>
<svg style="left:1378px;top:156.5px;" width="6" height="4" viewBox="0 0 6 4"><path d="M0 0 H5.4 L2.7 3.4 Z" fill="#555"/></svg>
<svg style="left:1375px;top:176px;" width="9" height="5" viewBox="0 0 9 5"><path d="M0 5 L4.5 0 L9 5 Z" fill="#868999"/></svg>
<div style="left:1375px;top:187px;width:9px;height:286px;background:#C2C3C9;"></div>
<svg style="left:1375px;top:826.5px;" width="9" height="5" viewBox="0 0 9 5"><path d="M0 0 L4.5 5 L9 0 Z" fill="#868999"/></svg>
<div style="left:967.5px;top:494.2px;width:403.5px;height:18.8px;background:#CCCEDB;"></div>
<span style="left:1000px;top:174.00px;font-size:12.4px;line-height:12.4px;color:#1E1E1E;letter-spacing:-0.252px;">Solution &#x27;GhiChiSoDien&#x27; (3 of 3 projects)</span>
<svg style="left:979.5px;top:172.5px;" width="16" height="16" viewBox="0 0 16 16"><path d="M0.56 0.6 H14.4 V12.5 H9.5 V11.4 H13.35 V3.3 H1.6 V7.35 H0.56 Z" fill="#3B3B3B"/><g transform="translate(0.16,6.0) scale(0.4)"><path d="M15.5 1.1 L20.9 3.4 V18.6 L15.5 20.9 L7.6 13.3 L3 16.9 L1 15.8 V6.1 L3 5.05 L7.6 8.7 Z M16.1 6.85 L10.9 11 L16.1 15.3 Z M3.2 8.1 V14 L5.85 11 Z" fill="#7B3FC9" fill-rule="evenodd"/></g></svg>
<span style="left:1018.5px;top:192.00px;font-size:12.4px;line-height:12.4px;color:#1E1E1E;transform:scaleX(0.9196);transform-origin:0 0;">GhiChiSoDien</span>
<svg style="left:976.5px;top:193.8px;" width="8" height="8" viewBox="0 0 8 8"><path d="M7.2 0.4 V7.2 H0.4 Z" fill="#1E1E1E"/></svg>
<div style="left:998px;top:191.9px;width:14px;height:12px;background:#FFFFFF;border:1px solid #388A34;"></div>
<span style="left:1000.2px;top:194.00px;font-size:8.6px;line-height:8.6px;color:#3A3A3A;font-weight:700;transform:scaleX(0.8909);transform-origin:0 0;">C#</span>
<span style="left:1036.3px;top:210.00px;font-size:12.4px;line-height:12.4px;color:#1E1E1E;transform:scaleX(0.9314);transform-origin:0 0;">Dependencies</span>
<svg style="left:996px;top:210.0px;" width="7" height="11" viewBox="0 0 7 11"><path d="M0.7 1 L5 5.5 L0.7 10 Z" fill="none" stroke="#1E1E1E" stroke-width="1.1"/></svg>
<svg style="left:1015.5px;top:210.5px;" width="16" height="11" viewBox="0 0 16 11"><path d="M7.6 0.4 H11 V3.8 H7.6 Z M11.6 0.4 H15 V5 H11.6 Z M0.4 6.4 H3 V9 H0.4 Z M7.6 6.4 H11.4 V10.4 H7.6 Z" fill="#3B3B3B"/><path d="M3 7.6 H7.6 M5.4 2.2 H7.6 M5.4 2.2 V7.6" stroke="#3B3B3B" stroke-width="1" stroke-dasharray="1.2 0.9" fill="none"/></svg>
<span style="left:1036.3px;top:228.00px;font-size:12.4px;line-height:12.4px;color:#1E1E1E;letter-spacing:-0.231px;">Models</span>
<svg style="left:994.5px;top:229.8px;" width="8" height="8" viewBox="0 0 8 8"><path d="M7.2 0.4 V7.2 H0.4 Z" fill="#1E1E1E"/></svg>
<svg style="left:1016px;top:226.5px;" width="15" height="13" viewBox="0 0 15 13"><path d="M4.9 2.1 H13.3 V11.4 H4.9 Z" fill="#FBF7EE" stroke="#DCB67A" stroke-width="1"/><path d="M2.5 6.7 H12.4 L10 12.3 H0.2 Z" fill="#DCB67A"/></svg>
<span style="left:1054.2px;top:246.00px;font-size:12.4px;line-height:12.4px;color:#1E1E1E;transform:scaleX(0.9465);transform-origin:0 0;">Item.cs</span>
<svg style="left:1012.5px;top:247.8px;" width="8" height="8" viewBox="0 0 8 8"><path d="M7.2 0.4 V7.2 H0.4 Z" fill="#1E1E1E"/></svg>
<span style="left:1035.9px;top:247.00px;font-size:9.4px;line-height:9.4px;color:#388A34;font-weight:700;transform:scaleX(0.9512);transform-origin:0 0;-webkit-text-stroke:0.4px #388A34;">C#</span>
<span style="left:1072px;top:264.00px;font-size:12.4px;line-height:12.4px;color:#1E1E1E;letter-spacing:-0.103px;">Item</span>
<svg style="left:1032.3px;top:264.0px;" width="7" height="11" viewBox="0 0 7 11"><path d="M0.7 1 L5 5.5 L0.7 10 Z" fill="none" stroke="#1E1E1E" stroke-width="1.1"/></svg>
<svg style="left:1051px;top:262.1px;" width="16" height="16" viewBox="0 0 16 16"><path d="M1 5.9 L6 0.9 L8.9 3.8 L4 8.8 Z" fill="#C27D1A"/><path d="M6.6 6.3 H12.6 M8.4 6.3 V11.5 H12.6" fill="none" stroke="#C27D1A" stroke-width="1.3"/><path d="M10.4 7.1 L12.7 4.8 L15 7.1 L12.7 9.4 Z M10.3 12.3 L12.6 10 L14.9 12.3 L12.6 14.6 Z" fill="#C27D1A"/></svg>
<span style="left:1054.2px;top:282.00px;font-size:12.4px;line-height:12.4px;color:#1E1E1E;transform:scaleX(0.9380);transform-origin:0 0;">KhachHang.cs</span>
<svg style="left:1014px;top:282.0px;" width="7" height="11" viewBox="0 0 7 11"><path d="M0.7 1 L5 5.5 L0.7 10 Z" fill="none" stroke="#1E1E1E" stroke-width="1.1"/></svg>
<span style="left:1035.9px;top:283.00px;font-size:9.4px;line-height:9.4px;color:#388A34;font-weight:700;transform:scaleX(0.9512);transform-origin:0 0;-webkit-text-stroke:0.4px #388A34;">C#</span>
<span style="left:1036.3px;top:300.00px;font-size:12.4px;line-height:12.4px;color:#1E1E1E;transform:scaleX(0.8755);transform-origin:0 0;">Services</span>
<svg style="left:994.5px;top:301.8px;" width="8" height="8" viewBox="0 0 8 8"><path d="M7.2 0.4 V7.2 H0.4 Z" fill="#1E1E1E"/></svg>
<svg style="left:1016px;top:298.5px;" width="15" height="13" viewBox="0 0 15 13"><path d="M4.9 2.1 H13.3 V11.4 H4.9 Z" fill="#FBF7EE" stroke="#DCB67A" stroke-width="1"/><path d="M2.5 6.7 H12.4 L10 12.3 H0.2 Z" fill="#DCB67A"/></svg>
<span style="left:1054.2px;top:318.00px;font-size:12.4px;line-height:12.4px;color:#1E1E1E;transform:scaleX(0.8991);transform-origin:0 0;">IDataStore.cs</span>
<svg style="left:1014px;top:318.0px;" width="7" height="11" viewBox="0 0 7 11"><path d="M0.7 1 L5 5.5 L0.7 10 Z" fill="none" stroke="#1E1E1E" stroke-width="1.1"/></svg>
<span style="left:1035.9px;top:319.00px;font-size:9.4px;line-height:9.4px;color:#388A34;font-weight:700;transform:scaleX(0.9512);transform-origin:0 0;-webkit-text-stroke:0.4px #388A34;">C#</span>
<span style="left:1054.2px;top:336.00px;font-size:12.4px;line-height:12.4px;color:#1E1E1E;transform:scaleX(0.9325);transform-origin:0 0;">MockDataStore.cs</span>
<svg style="left:1014px;top:336.0px;" width="7" height="11" viewBox="0 0 7 11"><path d="M0.7 1 L5 5.5 L0.7 10 Z" fill="none" stroke="#1E1E1E" stroke-width="1.1"/></svg>
<span style="left:1035.9px;top:337.00px;font-size:9.4px;line-height:9.4px;color:#388A34;font-weight:700;transform:scaleX(0.9512);transform-origin:0 0;-webkit-text-stroke:0.4px #388A34;">C#</span>
<span style="left:1036.3px;top:354.00px;font-size:12.4px;line-height:12.4px;color:#1E1E1E;transform:scaleX(0.9523);transform-origin:0 0;">ViewModels</span>
<svg style="left:994.5px;top:355.8px;" width="8" height="8" viewBox="0 0 8 8"><path d="M7.2 0.4 V7.2 H0.4 Z" fill="#1E1E1E"/></svg>
<svg style="left:1016px;top:352.5px;" width="15" height="13" viewBox="0 0 15 13"><path d="M4.9 2.1 H13.3 V11.4 H4.9 Z" fill="#FBF7EE" stroke="#DCB67A" stroke-width="1"/><path d="M2.5 6.7 H12.4 L10 12.3 H0.2 Z" fill="#DCB67A"/></svg>
<span style="left:1054.2px;top:372.00px;font-size:12.4px;line-height:12.4px;color:#1E1E1E;letter-spacing:-0.175px;">AboutViewModel.cs</span>
<svg style="left:1014px;top:372.0px;" width="7" height="11" viewBox="0 0 7 11"><path d="M0.7 1 L5 5.5 L0.7 10 Z" fill="none" stroke="#1E1E1E" stroke-width="1.1"/></svg>
<span style="left:1035.9px;top:373.00px;font-size:9.4px;line-height:9.4px;color:#388A34;font-weight:700;transform:scaleX(0.9512);transform-origin:0 0;-webkit-text-stroke:0.4px #388A34;">C#</span>
<span style="left:1054.2px;top:390.00px;font-size:12.4px;line-height:12.4px;color:#1E1E1E;transform:scaleX(0.9256);transform-origin:0 0;">BaseViewModel.cs</span>
<svg style="left:1014px;top:390.0px;" width="7" height="11" viewBox="0 0 7 11"><path d="M0.7 1 L5 5.5 L0.7 10 Z" fill="none" stroke="#1E1E1E" stroke-width="1.1"/></svg>
<span style="left:1035.9px;top:391.00px;font-size:9.4px;line-height:9.4px;color:#388A34;font-weight:700;transform:scaleX(0.9512);transform-origin:0 0;-webkit-text-stroke:0.4px #388A34;">C#</span>
<span style="left:1054.2px;top:408.00px;font-size:12.4px;line-height:12.4px;color:#1E1E1E;letter-spacing:-0.252px;">ItemDetailViewModel.cs</span>
<svg style="left:1014px;top:408.0px;" width="7" height="11" viewBox="0 0 7 11"><path d="M0.7 1 L5 5.5 L0.7 10 Z" fill="none" stroke="#1E1E1E" stroke-width="1.1"/></svg>
<span style="left:1035.9px;top:409.00px;font-size:9.4px;line-height:9.4px;color:#388A34;font-weight:700;transform:scaleX(0.9512);transform-origin:0 0;-webkit-text-stroke:0.4px #388A34;">C#</span>
<span style="left:1054.2px;top:426.00px;font-size:12.4px;line-height:12.4px;color:#1E1E1E;letter-spacing:-0.295px;">ItemsViewModel.cs</span>
<svg style="left:1014px;top:426.0px;" width="7" height="11" viewBox="0 0 7 11"><path d="M0.7 1 L5 5.5 L0.7 10 Z" fill="none" stroke="#1E1E1E" stroke-width="1.1"/></svg>
<span style="left:1035.9px;top:427.00px;font-size:9.4px;line-height:9.4px;color:#388A34;font-weight:700;transform:scaleX(0.9512);transform-origin:0 0;-webkit-text-stroke:0.4px #388A34;">C#</span>
<span style="left:1054.2px;top:444.00px;font-size:12.4px;line-height:12.4px;color:#1E1E1E;transform:scaleX(0.9445);transform-origin:0 0;">TrangChuViewModel.cs</span>
<svg style="left:1014px;top:444.0px;" width="7" height="11" viewBox="0 0 7 11"><path d="M0.7 1 L5 5.5 L0.7 10 Z" fill="none" stroke="#1E1E1E" stroke-width="1.1"/></svg>
<span style="left:1035.9px;top:445.00px;font-size:9.4px;line-height:9.4px;color:#388A34;font-weight:700;transform:scaleX(0.9512);transform-origin:0 0;-webkit-text-stroke:0.4px #388A34;">C#</span>
<span style="left:1036.3px;top:462.00px;font-size:12.4px;line-height:12.4px;color:#1E1E1E;transform:scaleX(0.8956);transform-origin:0 0;">Views</span>
<svg style="left:994.5px;top:463.8px;" width="8" height="8" viewBox="0 0 8 8"><path d="M7.2 0.4 V7.2 H0.4 Z" fill="#1E1E1E"/></svg>
<svg style="left:1016px;top:460.5px;" width="15" height="13" viewBox="0 0 15 13"><path d="M4.9 2.1 H13.3 V11.4 H4.9 Z" fill="#FBF7EE" stroke="#DCB67A" stroke-width="1"/><path d="M2.5 6.7 H12.4 L10 12.3 H0.2 Z" fill="#DCB67A"/></svg>
<span style="left:1054.2px;top:480.00px;font-size:12.4px;line-height:12.4px;color:#1E1E1E;letter-spacing:-0.256px;">AboutPage.xaml</span>
<svg style="left:1014px;top:480.0px;" width="7" height="11" viewBox="0 0 7 11"><path d="M0.7 1 L5 5.5 L0.7 10 Z" fill="none" stroke="#1E1E1E" stroke-width="1.1"/></svg>
<svg style="left:1033.9px;top:478.0px;" width="13" height="16.5" viewBox="0 0 13 16.5"><path d="M2 10.6 V3 H7.6 L11 6.5 V14 H9.6" fill="none" stroke="#3B3B3B" stroke-width="1.5"/><path d="M7.4 3 V6.8 H11" fill="none" stroke="#3B3B3B" stroke-width="1"/><path d="M2.6 11.4 H6.9 V15.2 H2.6 Z" fill="#1BA1E2"/><path d="M1.7 11.5 L0.4 13.2 L1.7 14.9 M7.9 11.5 L9.2 13.2 L7.9 14.9" fill="none" stroke="#3B3B3B" stroke-width="0.9"/></svg>
<span style="left:1054.2px;top:498.00px;font-size:12.4px;line-height:12.4px;color:#1E1E1E;transform:scaleX(0.9564);transform-origin:0 0;">HomePage.xaml</span>
<svg style="left:1012.5px;top:499.8px;" width="8" height="8" viewBox="0 0 8 8"><path d="M7.2 0.4 V7.2 H0.4 Z" fill="#1E1E1E"/></svg>
<svg style="left:1033.9px;top:496.0px;" width="13" height="16.5" viewBox="0 0 13 16.5"><path d="M2 10.6 V3 H7.6 L11 6.5 V14 H9.6" fill="none" stroke="#3B3B3B" stroke-width="1.5"/><path d="M7.4 3 V6.8 H11" fill="none" stroke="#3B3B3B" stroke-width="1"/><path d="M2.6 11.4 H6.9 V15.2 H2.6 Z" fill="#1BA1E2"/><path d="M1.7 11.5 L0.4 13.2 L1.7 14.9 M7.9 11.5 L9.2 13.2 L7.9 14.9" fill="none" stroke="#3B3B3B" stroke-width="0.9"/></svg>
<span style="left:1072.1px;top:516.00px;font-size:12.4px;line-height:12.4px;color:#1E1E1E;transform:scaleX(0.9466);transform-origin:0 0;">HomePage.xaml.cs</span>
<svg style="left:1032.3px;top:516.0px;" width="7" height="11" viewBox="0 0 7 11"><path d="M0.7 1 L5 5.5 L0.7 10 Z" fill="none" stroke="#1E1E1E" stroke-width="1.1"/></svg>
<span style="left:1053.8px;top:517.00px;font-size:9.4px;line-height:9.4px;color:#388A34;font-weight:700;transform:scaleX(0.9512);transform-origin:0 0;-webkit-text-stroke:0.4px #388A34;">C#</span>
<span style="left:1054.2px;top:534.00px;font-size:12.4px;line-height:12.4px;color:#1E1E1E;transform:scaleX(0.9490);transform-origin:0 0;">ItemDetailPage.xaml</span>
<svg style="left:1014px;top:534.0px;" width="7" height="11" viewBox="0 0 7 11"><path d="M0.7 1 L5 5.5 L0.7 10 Z" fill="none" stroke="#1E1E1E" stroke-width="1.1"/></svg>
<svg style="left:1033.9px;top:532.0px;" width="13" height="16.5" viewBox="0 0 13 16.5"><path d="M2 10.6 V3 H7.6 L11 6.5 V14 H9.6" fill="none" stroke="#3B3B3B" stroke-width="1.5"/><path d="M7.4 3 V6.8 H11" fill="none" stroke="#3B3B3B" stroke-width="1"/><path d="M2.6 11.4 H6.9 V15.2 H2.6 Z" fill="#1BA1E2"/><path d="M1.7 11.5 L0.4 13.2 L1.7 14.9 M7.9 11.5 L9.2 13.2 L7.9 14.9" fill="none" stroke="#3B3B3B" stroke-width="0.9"/></svg>
<span style="left:1054.2px;top:552.00px;font-size:12.4px;line-height:12.4px;color:#1E1E1E;transform:scaleX(0.9410);transform-origin:0 0;">ItemsPage.xaml</span>
<svg style="left:1014px;top:552.0px;" width="7" height="11" viewBox="0 0 7 11"><path d="M0.7 1 L5 5.5 L0.7 10 Z" fill="none" stroke="#1E1E1E" stroke-width="1.1"/></svg>
<svg style="left:1033.9px;top:550.0px;" width="13" height="16.5" viewBox="0 0 13 16.5"><path d="M2 10.6 V3 H7.6 L11 6.5 V14 H9.6" fill="none" stroke="#3B3B3B" stroke-width="1.5"/><path d="M7.4 3 V6.8 H11" fill="none" stroke="#3B3B3B" stroke-width="1"/><path d="M2.6 11.4 H6.9 V15.2 H2.6 Z" fill="#1BA1E2"/><path d="M1.7 11.5 L0.4 13.2 L1.7 14.9 M7.9 11.5 L9.2 13.2 L7.9 14.9" fill="none" stroke="#3B3B3B" stroke-width="0.9"/></svg>
<span style="left:1054.2px;top:570.00px;font-size:12.4px;line-height:12.4px;color:#1E1E1E;transform:scaleX(0.9554);transform-origin:0 0;">MainPage.xaml</span>
<svg style="left:1014px;top:570.0px;" width="7" height="11" viewBox="0 0 7 11"><path d="M0.7 1 L5 5.5 L0.7 10 Z" fill="none" stroke="#1E1E1E" stroke-width="1.1"/></svg>
<svg style="left:1033.9px;top:568.0px;" width="13" height="16.5" viewBox="0 0 13 16.5"><path d="M2 10.6 V3 H7.6 L11 6.5 V14 H9.6" fill="none" stroke="#3B3B3B" stroke-width="1.5"/><path d="M7.4 3 V6.8 H11" fill="none" stroke="#3B3B3B" stroke-width="1"/><path d="M2.6 11.4 H6.9 V15.2 H2.6 Z" fill="#1BA1E2"/><path d="M1.7 11.5 L0.4 13.2 L1.7 14.9 M7.9 11.5 L9.2 13.2 L7.9 14.9" fill="none" stroke="#3B3B3B" stroke-width="0.9"/></svg>
<span style="left:1054.2px;top:588.00px;font-size:12.4px;line-height:12.4px;color:#1E1E1E;transform:scaleX(0.9568);transform-origin:0 0;">NewItemPage.xaml</span>
<svg style="left:1014px;top:588.0px;" width="7" height="11" viewBox="0 0 7 11"><path d="M0.7 1 L5 5.5 L0.7 10 Z" fill="none" stroke="#1E1E1E" stroke-width="1.1"/></svg>
<svg style="left:1033.9px;top:586.0px;" width="13" height="16.5" viewBox="0 0 13 16.5"><path d="M2 10.6 V3 H7.6 L11 6.5 V14 H9.6" fill="none" stroke="#3B3B3B" stroke-width="1.5"/><path d="M7.4 3 V6.8 H11" fill="none" stroke="#3B3B3B" stroke-width="1"/><path d="M2.6 11.4 H6.9 V15.2 H2.6 Z" fill="#1BA1E2"/><path d="M1.7 11.5 L0.4 13.2 L1.7 14.9 M7.9 11.5 L9.2 13.2 L7.9 14.9" fill="none" stroke="#3B3B3B" stroke-width="0.9"/></svg>
<span style="left:1054.2px;top:606.00px;font-size:12.4px;line-height:12.4px;color:#1E1E1E;transform:scaleX(0.9160);transform-origin:0 0;">SearchPage.xaml</span>
<svg style="left:1012.5px;top:607.8px;" width="8" height="8" viewBox="0 0 8 8"><path d="M7.2 0.4 V7.2 H0.4 Z" fill="#1E1E1E"/></svg>
<svg style="left:1033.9px;top:604.0px;" width="13" height="16.5" viewBox="0 0 13 16.5"><path d="M2 10.6 V3 H7.6 L11 6.5 V14 H9.6" fill="none" stroke="#3B3B3B" stroke-width="1.5"/><path d="M7.4 3 V6.8 H11" fill="none" stroke="#3B3B3B" stroke-width="1"/><path d="M2.6 11.4 H6.9 V15.2 H2.6 Z" fill="#1BA1E2"/><path d="M1.7 11.5 L0.4 13.2 L1.7 14.9 M7.9 11.5 L9.2 13.2 L7.9 14.9" fill="none" stroke="#3B3B3B" stroke-width="0.9"/></svg>
<span style="left:1072.1px;top:624.00px;font-size:12.4px;line-height:12.4px;color:#1E1E1E;transform:scaleX(0.9125);transform-origin:0 0;">SearchPage.xaml.cs</span>
<svg style="left:1032.3px;top:624.0px;" width="7" height="11" viewBox="0 0 7 11"><path d="M0.7 1 L5 5.5 L0.7 10 Z" fill="none" stroke="#1E1E1E" stroke-width="1.1"/></svg>
<span style="left:1053.8px;top:625.00px;font-size:9.4px;line-height:9.4px;color:#388A34;font-weight:700;transform:scaleX(0.9512);transform-origin:0 0;-webkit-text-stroke:0.4px #388A34;">C#</span>
<span style="left:1036.3px;top:642.00px;font-size:12.4px;line-height:12.4px;color:#1E1E1E;letter-spacing:-0.179px;">App.xaml</span>
<svg style="left:994.5px;top:643.8px;" width="8" height="8" viewBox="0 0 8 8"><path d="M7.2 0.4 V7.2 H0.4 Z" fill="#1E1E1E"/></svg>
<svg style="left:1015.9px;top:640.0px;" width="13" height="16.5" viewBox="0 0 13 16.5"><path d="M2 10.6 V3 H7.6 L11 6.5 V14 H9.6" fill="none" stroke="#3B3B3B" stroke-width="1.5"/><path d="M7.4 3 V6.8 H11" fill="none" stroke="#3B3B3B" stroke-width="1"/><path d="M2.6 11.4 H6.9 V15.2 H2.6 Z" fill="#1BA1E2"/><path d="M1.7 11.5 L0.4 13.2 L1.7 14.9 M7.9 11.5 L9.2 13.2 L7.9 14.9" fill="none" stroke="#3B3B3B" stroke-width="0.9"/></svg>
<span style="left:1054.2px;top:660.00px;font-size:12.4px;line-height:12.4px;color:#1E1E1E;letter-spacing:-0.278px;">App.xaml.cs</span>
<svg style="left:1014px;top:660.0px;" width="7" height="11" viewBox="0 0 7 11"><path d="M0.7 1 L5 5.5 L0.7 10 Z" fill="none" stroke="#1E1E1E" stroke-width="1.1"/></svg>
<span style="left:1035.9px;top:661.00px;font-size:9.4px;line-height:9.4px;color:#388A34;font-weight:700;transform:scaleX(0.9512);transform-origin:0 0;-webkit-text-stroke:0.4px #388A34;">C#</span>
<span style="left:1036.3px;top:678.00px;font-size:12.4px;line-height:12.4px;color:#1E1E1E;transform:scaleX(0.9499);transform-origin:0 0;">AssemblyInfo.cs</span>
<span style="left:1018.0px;top:679.00px;font-size:9.4px;line-height:9.4px;color:#388A34;font-weight:700;transform:scaleX(0.9512);transform-origin:0 0;-webkit-text-stroke:0.4px #388A34;">C#</span>
<span style="left:1018.5px;top:696.00px;font-size:12.4px;line-height:12.4px;color:#1E1E1E;font-weight:700;transform:scaleX(0.9111);transform-origin:0 0;">GhiChiSoDien.Android</span>
<svg style="left:976.5px;top:697.8px;" width="8" height="8" viewBox="0 0 8 8"><path d="M7.2 0.4 V7.2 H0.4 Z" fill="#1E1E1E"/></svg>
<svg style="left:999.5px;top:693.5px;" width="10" height="16" viewBox="0 0 10 16"><path d="M0.7 0.7 H9.3 V15.3 H0.7 Z" fill="#FFFFFF" stroke="#3B3B3B" stroke-width="1"/><path d="M0.7 12.4 H9.3 V15.3 H0.7 Z" fill="#3B3B3B"/><path d="M2.4 13.9 H3.8 M6.2 13.9 H7.6" stroke="#F5F5F5" stroke-width="0.9"/><path d="M3.6 4.6 H6.4 V8.6 H3.6 Z" fill="#37A637"/><path d="M3.4 3 L4.2 4.4 M6.6 3 L5.8 4.4 M2.6 5.4 V7.8 M7.4 5.4 V7.8 M4.2 8.6 V10 M5.8 8.6 V10" stroke="#37A637" stroke-width="0.8"/></svg>
<span style="left:1036.3px;top:714.00px;font-size:12.4px;line-height:12.4px;color:#1E1E1E;transform:scaleX(0.9252);transform-origin:0 0;">Connected Services</span>
<svg style="left:1015.5px;top:713.5px;" width="16" height="13" viewBox="0 0 16 13"><path d="M4 9 H3.4 A2.8 2.8 0 0 1 3.4 3.6 A4 4 0 0 1 11 2.8 A3.2 3.2 0 0 1 12.4 9 H11.6" fill="none" stroke="#3B3B3B" stroke-width="1.1"/><path d="M7.8 4.4 V12.4 M5.6 6.4 L7.8 4.2 L10 6.4" fill="none" stroke="#3B3B3B" stroke-width="1.2"/><circle cx="7.8" cy="11.4" r="1.4" fill="#3B3B3B"/></svg>
<span style="left:1036.3px;top:732.00px;font-size:12.4px;line-height:12.4px;color:#1E1E1E;transform:scaleX(0.9312);transform-origin:0 0;">Properties</span>
<svg style="left:996px;top:732.0px;" width="7" height="11" viewBox="0 0 7 11"><path d="M0.7 1 L5 5.5 L0.7 10 Z" fill="none" stroke="#1E1E1E" stroke-width="1.1"/></svg>
<svg style="left:1016px;top:730.0px;" width="15" height="15" viewBox="0 0 15 15"><path d="M2.4 12.6 L8.6 6.4" stroke="#3B3B3B" stroke-width="3.1" stroke-linecap="round"/><circle cx="10.3" cy="4.7" r="4.1" fill="#3B3B3B"/><path d="M9.7 3.5 L11.5 5.3 L15.4 1.6 L13.4 -0.4 Z" fill="#F5F5F5"/></svg>
<span style="left:1036.3px;top:750.00px;font-size:12.4px;line-height:12.4px;color:#1E1E1E;transform:scaleX(0.8931);transform-origin:0 0;">References</span>
<svg style="left:994.5px;top:751.8px;" width="8" height="8" viewBox="0 0 8 8"><path d="M7.2 0.4 V7.2 H0.4 Z" fill="#1E1E1E"/></svg>
<svg style="left:1016px;top:751.5px;" width="15" height="8" viewBox="0 0 15 8"><path d="M0.1 1.4 H3.6 V6.2 H0.1 Z M8.1 0.4 H13.9 V7.4 H8.1 Z" fill="#3B3B3B"/><path d="M4.4 3.9 H6.2" stroke="#3B3B3B" stroke-width="1.1"/></svg>
<span style="left:1054.2px;top:768.00px;font-size:12.4px;line-height:12.4px;color:#1E1E1E;transform:scaleX(0.9135);transform-origin:0 0;">Analyzers</span>
<svg style="left:1034px;top:767.0px;" width="15" height="14" viewBox="0 0 15 14"><path d="M1.6 1 H9 M10.8 1 H14 M3.4 4.2 H13.4 M6.8 7.4 H11.4" stroke="#3B3B3B" stroke-width="1.5"/><circle cx="4.6" cy="9.8" r="3.6" fill="#3B3B3B"/><path d="M4.6 7.6 V8.4 M4.6 9.4 V12" stroke="#F5F5F5" stroke-width="1.1"/></svg>
<span style="left:1054.2px;top:786.00px;font-size:12.4px;line-height:12.4px;color:#1E1E1E;transform:scaleX(0.9234);transform-origin:0 0;">GhiChiSoDien</span>
<svg style="left:1034px;top:787.5px;" width="15" height="8" viewBox="0 0 15 8"><path d="M0.1 1.4 H3.6 V6.2 H0.1 Z M8.1 0.4 H13.9 V7.4 H8.1 Z" fill="#3B3B3B"/><path d="M4.4 3.9 H6.2" stroke="#3B3B3B" stroke-width="1.1"/></svg>
<span style="left:1054.2px;top:804.00px;font-size:12.4px;line-height:12.4px;color:#1E1E1E;letter-spacing:0.031px;">Mono.Android</span>
<svg style="left:1034px;top:805.5px;" width="15" height="8" viewBox="0 0 15 8"><path d="M0.1 1.4 H3.6 V6.2 H0.1 Z M8.1 0.4 H13.9 V7.4 H8.1 Z" fill="#3B3B3B"/><path d="M4.4 3.9 H6.2" stroke="#3B3B3B" stroke-width="1.1"/></svg>
<span style="left:1054.2px;top:822.00px;font-size:12.4px;line-height:12.4px;color:#1E1E1E;transform:scaleX(0.9077);transform-origin:0 0;">System</span>
<svg style="left:1034px;top:823.5px;" width="15" height="8" viewBox="0 0 15 8"><path d="M0.1 1.4 H3.6 V6.2 H0.1 Z M8.1 0.4 H13.9 V7.4 H8.1 Z" fill="#3B3B3B"/><path d="M4.4 3.9 H6.2" stroke="#3B3B3B" stroke-width="1.1"/></svg>
<div style="left:966.5px;top:838.5px;width:101.4px;height:20.2px;background:#F5F5F5;border:1px solid #CCCEDB;border-top:none;"></div>
<span style="left:972.5px;top:843.00px;font-size:12.4px;line-height:12.4px;color:#0E70C0;letter-spacing:-0.285px;">Solution Explorer</span>
<span style="left:1074.5px;top:843.00px;font-size:12.4px;line-height:12.4px;color:#1E1E1E;transform:scaleX(0.9200);transform-origin:0 0;">Team Explorer</span>
<div style="left:836px;top:243px;width:6px;height:56.5px;background:#4E4E4E;border-radius:1.5px;"></div>
<div style="left:836px;top:357.5px;width:5px;height:127.5px;background:#4E4E4E;border-radius:1.5px;"></div>
<div style="left:421.2px;top:21.2px;width:417.3px;height:849.4px;background:#3E3E3E;border-radius:52px 52px 52px 58px / 52px 52px 52px 46px;background:linear-gradient(180deg,rgba(30,30,30,0) 0%,rgba(30,30,30,0) 30%,rgba(44,44,44,0.5) 75%,rgba(50,50,50,0.85) 94%,rgba(44,44,44,0.9) 100%),linear-gradient(90deg,#7C7C7C 0%,#6A6A6A 2%,#4A4A4A 9%,#3E3E3E 30%,#383838 100%);"></div>
<div style="left:424.0px;top:23.8px;width:411.7px;height:844.4px;background:#171717;border-radius:49.4px 49.4px 49.4px 55.4px / 49.4px 49.4px 49.4px 43.6px;"></div>
<div style="left:426.0px;top:25.799999999999997px;width:407.7px;height:840.8px;background:#2D2D2D;border-radius:47.4px 47.4px 47.4px 53.4px / 47.4px 47.4px 47.4px 42px;background:linear-gradient(180deg,rgba(29,29,31,0) 0%,rgba(29,29,31,0.05) 8%,rgba(29,29,31,0.45) 40%,rgba(29,29,31,0.8) 65%,rgba(29,29,31,1) 90%),linear-gradient(90deg,#353535 0%,#313131 12%,#2D2D2D 45%,#262626 72%,#202020 92%,#1F1F1F 100%);"></div>
<div style="left:490.2px;top:48.8px;width:16px;height:16px;background:#262628;border-radius:50%;background:radial-gradient(circle closest-side,#1b1b20 0%,#1e1e23 44%,#2a2a2d 54%,#373739 62%,#363637 84%,#303030 100%);"></div>
<div style="left:500px;top:57.6px;width:1.6px;height:1.3px;background:#8A5060;border-radius:50%;"></div>
<div style="left:553.3px;top:50.3px;width:152.7px;height:12.6px;background:#1B1B1B;border-radius:7px;background-color:#1B1B1B;background-image:radial-gradient(circle at 1.8px 1.8px,#0a0a0a 0.6px,transparent 1.0px),radial-gradient(circle at 1.8px 1.8px,#0a0a0a 0.6px,transparent 1.0px);background-size:3.7px 4.2px,3.7px 4.2px;background-position:0.6px 0.2px,2.45px 2.3px;box-shadow:0 0 0 0.6px #262626;"></div>
<div style="left:553.3px;top:829.2px;width:152.7px;height:12.6px;background:#0E0E0E;border-radius:7px;background-color:#101010;background-image:radial-gradient(circle at 1.8px 1.8px,#0a0a0a 0.6px,transparent 1.0px),radial-gradient(circle at 1.8px 1.8px,#0a0a0a 0.6px,transparent 1.0px);background-size:3.7px 4.2px,3.7px 4.2px;background-position:0.6px 0.2px,2.45px 2.3px;box-shadow:0 0 0 0.6px #343434;"></div>
<div style="left:438px;top:102.8px;width:383px;height:21.9px;background:#1976D2;"></div>
<div style="left:438px;top:124.7px;width:383px;height:96.5px;background:#2196F3;"></div>
<div style="left:438px;top:221.2px;width:383px;height:517.6px;background:#FAFAFA;"></div>
<div style="left:438px;top:738.7px;width:383px;height:44.8px;background:#000000;"></div>
<svg style="left:454.6px;top:106.6px;" width="14.6" height="14.6" viewBox="0 0 14.6 14.6"><path fill="#FFFFFF" fill-rule="evenodd" d="M12.56 8.02c.03-.23.05-.47.05-.72s-.02-.49-.06-.72l1.55-1.21c.14-.11.18-.31.09-.47l-1.47-2.54c-.09-.16-.28-.21-.45-.16l-1.82.73c-.38-.29-.79-.53-1.24-.72L8.93.27A.37.37 0 0 0 8.57 0H5.63c-.18 0-.33.13-.36.31L4.99 2.25c-.45.18-.86.43-1.24.72l-1.82-.73c-.17-.06-.36 0-.45.16L.01 4.94c-.1.16-.05.36.09.47l1.55 1.21c-.04.23-.06.48-.06.72s.02.49.06.72L.1 9.27c-.14.11-.18.31-.09.47l1.47 2.54c.09.16.28.21.45.16l1.82-.73c.38.29.79.53 1.24.72l.28 1.94c.03.18.18.31.36.31h2.94c.18 0 .33-.13.36-.31l.28-1.94c.45-.18.86-.43 1.24-.72l1.82.73c.17.06.36 0 .45-.16l1.47-2.54c.09-.16.05-.36-.09-.47l-1.54-1.25zM7.1 9.85A2.56 2.56 0 0 1 4.55 7.3 2.56 2.56 0 0 1 7.1 4.75 2.56 2.56 0 0 1 9.65 7.3 2.56 2.56 0 0 1 7.1 9.85z"/></svg>
<div style="left:477.7px;top:107.4px;width:13.2px;height:13.2px;background:#7DB2E8;border-radius:50%;background:radial-gradient(circle at 40% 40%,#6FA9E6 0%,#7CB3EA 55%,#B9D6F3 100%);"></div>
<svg style="left:725.5px;top:107.6px;" width="16.4" height="12.6" viewBox="0 0 16.4 12.6"><path d="M8.2 12.4 L0.2 2.8 C2.4 1 5.2 0 8.2 0 S14 1 16.2 2.8 Z" fill="#FFFFFF"/></svg>
<svg style="left:743.6px;top:107.4px;" width="13.2" height="12.8" viewBox="0 0 13.2 12.8"><path d="M0 12.6 L12.8 0 V12.6 Z" fill="#6FA7E3"/><path d="M0 12.6 L8.2 4.5 V12.6 Z" fill="#FFFFFF"/></svg>
<svg style="left:764.8px;top:106.6px;" width="8.4" height="13.8" viewBox="0 0 8.4 13.8"><path d="M2.6 0 H5.8 V1.4 H8 V13.6 H0.4 V1.4 H2.6 Z" fill="#FFFFFF"/></svg>
<span style="left:780px;top:108.00px;font-size:13.2px;line-height:13.2px;color:#FFFFFF;letter-spacing:-0.124px;-webkit-text-stroke:0.45px #FFFFFF;">3:50</span>
<span style="left:453.5px;top:143.00px;font-size:18.4px;line-height:18.4px;color:#FFFFFF;letter-spacing:-0.032px;-webkit-text-stroke:0.55px #FFFFFF;">Trang Chủ - Chọn file XML</span>
<span style="left:497.6px;top:193.00px;font-size:14px;line-height:14px;color:#FFFFFF;transform:scaleX(0.8626);transform-origin:0 0;-webkit-text-stroke:0.55px #FFFFFF;">TRANG CHỦ</span>
<span style="left:697.2px;top:193.00px;font-size:14px;line-height:14px;color:#BEDFFB;transform:scaleX(0.8870);transform-origin:0 0;-webkit-text-stroke:0.55px #BEDFFB;">TÌM KIẾM</span>
<div style="left:438px;top:218.6px;width:191.5px;height:2.7px;background:#FAFAFA;"></div>
<svg style="left:560px;top:250px;" width="150" height="134" viewBox="0 0 150 134"><g fill="none" stroke="#1A81F6" stroke-width="4.4" stroke-linejoin="miter"><path d="M89.1 52.4 V39.7 L64.3 10.15 H17 A6.45 6.45 0 0 0 10.55 16.6 V117.6 A6.45 6.45 0 0 0 17 124.05 H82.65 A6.45 6.45 0 0 0 89.1 117.6 V108.2"/><path d="M63 10.15 V34.4 A6.5 6.5 0 0 0 69.5 40.9 H89.1"/><rect x="41.05" y="54.05" width="96.1" height="52.4" rx="10.8" stroke-width="4.3"/></g><g fill="#1A81F6"><path d="M51.9 65.1 H56.6 L74 95.8 H69.3 Z M69.3 65.1 H74 L56.6 95.8 H51.9 Z"/><path d="M78.1 95.8 V65.1 H83 L89.15 77.7 L95.3 65.1 H100.2 V95.8 H95.9 V73.7 L91.3 82.4 H87 L82.4 73.7 V95.8 Z"/><path d="M104.3 65.1 H108.8 V91 H126.2 V95.8 H104.3 Z"/></g></svg>
<span style="left:465.1px;top:423.00px;font-size:16px;line-height:16px;color:#1F2FE0;font-weight:700;letter-spacing:-0.216px;">Chọn file XML cần thực hiện cập nhật chỉ số</span>
<span style="left:453.1px;top:466.00px;font-size:13px;line-height:13px;color:#F6457F;letter-spacing:-0.106px;">Tên file</span>
<span style="left:453.1px;top:486.00px;font-size:13px;line-height:13px;color:#777777;letter-spacing:-0.200px;">T1_12091_TEST.xml</span>
<div style="left:438px;top:502.9px;width:383px;height:1.3px;background:#E2E2E2;"></div>
<span style="left:453.1px;top:510.00px;font-size:13px;line-height:13px;color:#F6457F;letter-spacing:-0.219px;">Số bản ghi</span>
<span style="left:453.1px;top:530.00px;font-size:13px;line-height:13px;color:#777777;letter-spacing:0.198px;">337</span>
<div style="left:438px;top:547.0px;width:383px;height:1.3px;background:#E2E2E2;"></div>
<span style="left:453.1px;top:553.00px;font-size:13px;line-height:13px;color:#F6457F;letter-spacing:0.020px;">Ngày tạo file</span>
<span style="left:453.1px;top:574.00px;font-size:13px;line-height:13px;color:#777777;letter-spacing:0.251px;">10:19:00 04/05/2020</span>
<div style="left:438px;top:590.5px;width:383px;height:1.3px;background:#E2E2E2;"></div>
<span style="left:453.1px;top:597.00px;font-size:13px;line-height:13px;color:#F6457F;letter-spacing:-0.079px;">Ngày cập nhật</span>
<span style="left:453.1px;top:618.00px;font-size:13px;line-height:13px;color:#777777;letter-spacing:0.251px;">10:19:00 04/05/2020</span>
<div style="left:438px;top:634.6px;width:383px;height:1.3px;background:#E2E2E2;"></div>
<div style="left:441px;top:641.2px;width:376.2px;height:30.8px;background:#D6D7D7;border-radius:2px;box-shadow:0 1px 2px rgba(0,0,0,0.35),0 0 1px rgba(0,0,0,0.2);"></div>
<span style="left:583.2px;top:651.00px;font-size:13.6px;line-height:13.6px;color:#212121;transform:scaleX(0.9067);transform-origin:0 0;-webkit-text-stroke:0.55px #212121;">MỞ FILE XML ...</span>
<div style="left:438px;top:676.8px;width:383px;height:1.3px;background:#E2E2E2;"></div>
<svg style="left:517px;top:754.4px;" width="12.4" height="13.8" viewBox="0 0 12.4 13.8"><path d="M12 0.4 V13.4 L0.4 6.9 Z" fill="#A3A3A3"/></svg>
<svg style="left:619.6px;top:752.1px;" width="18" height="18" viewBox="0 0 18 18"><circle cx="9" cy="9" r="8" fill="none" stroke="#C9C9C9" stroke-width="1.3"/><circle cx="9" cy="9" r="5.6" fill="#9E9E9E"/></svg>
<div style="left:729px;top:755.3px;width:11.8px;height:11.8px;background:#A3A3A3;border-radius:1px;"></div>
<div style="left:846px;top:21px;width:65px;height:514.8px;background:#EFEFEF;border:1px solid #000000;"></div>
<div style="left:861.3px;top:35.3px;width:7.7px;height:1.2px;background:#8CA2AD;"></div>
<svg style="left:888px;top:32px;" width="8" height="8" viewBox="0 0 8 8"><path d="M0.5 0.5 L7.5 7.5 M7.5 0.5 L0.5 7.5" stroke="#607D8B" stroke-width="1.25"/></svg>
<svg style="left:865.9px;top:56.599999999999994px;" width="24" height="24" viewBox="0 0 24 24"><path fill="#607D8B" d="M13 3h-2v10h2V3zm4.83 2.17l-1.42 1.42C17.99 7.86 19 9.81 19 12c0 3.87-3.13 7-7 7s-7-3.13-7-7c0-2.19 1.01-4.14 2.58-5.42L6.17 5.17C4.23 6.82 3 9.26 3 12c0 4.970 4.03 9 9 9s9-4.03 9-9c0-2.74-1.23-5.18-3.17-6.830z"/></svg>
<svg style="left:865.6px;top:101.0px;" width="24" height="24" viewBox="0 0 24 24"><path fill="#607D8B" d="M3 9v6h4l5 5V4L7 9H3zm13.5 3c0-1.77-1.02-3.29-2.5-4.03v8.05c1.48-.73 2.5-2.25 2.5-4.020zM14 3.23v2.06c2.89.86 5 3.54 5 6.71s-2.11 5.85-5 6.71v2.06c4.01-.91 7-4.49 7-8.77s-2.99-7.86-7-8.770z"/></svg>
<svg style="left:865.8px;top:144.9px;" width="24" height="24" viewBox="0 0 24 24"><path fill="#607D8B" d="M18.5 12c0-1.77-1.02-3.29-2.5-4.03v8.05c1.48-.73 2.5-2.25 2.5-4.020zM5 9v6h4l5 5V4L9 9H5z"/></svg>
<svg style="left:866px;top:188.8px;" width="24" height="24" viewBox="0 0 24 24"><g transform="translate(12.05,12.7) rotate(45)"><rect x="-9.6" y="-6.2" width="19.2" height="12.4" rx="1.4" fill="#607D8B"/><rect x="-6.6" y="-4.5" width="13.2" height="9" fill="#EFEFEF"/></g><path d="M12.2 1.15 A11.6 11.6 0 0 1 23.6 10.9" fill="none" stroke="#607D8B" stroke-width="1.5"/><path d="M9.6 1.5 L13.4 -0.9 L13.2 3.5 Z" fill="#607D8B"/></svg>
<svg style="left:866px;top:232.8px;" width="24" height="24" viewBox="0 0 24 24"><g transform="translate(11.6,12.55) rotate(-45)"><rect x="-9.6" y="-6.2" width="19.2" height="12.4" rx="1.4" fill="#607D8B"/><rect x="-6.6" y="-4.5" width="13.2" height="9" fill="#EFEFEF"/></g><path d="M0.2 11.2 A11.5 11.5 0 0 1 11.6 1.1" fill="none" stroke="#607D8B" stroke-width="1.5"/><path d="M14.2 1.5 L10.4 -0.9 L10.6 3.5 Z" fill="#607D8B"/></svg>
<svg style="left:865.9px;top:276.90000000000003px;" width="24" height="24" viewBox="0 0 24 24"><path fill="#607D8B" d="M9 2L7.17 4H4c-1.1 0-2 .9-2 2v12c0 1.1.9 2 2 2h16c1.1 0 2-.9 2-2V6c0-1.1-.9-2-2-2h-3.170L15 2H9z"/><circle cx="12" cy="12" r="5" fill="#EFEFEF"/><circle cx="12" cy="12" r="3.1" fill="#607D8B"/></svg>
<svg style="left:865.9px;top:320.8px;" width="24" height="24" viewBox="0 0 24 24"><circle cx="9.7" cy="9.9" r="5.8" fill="none" stroke="#607D8B" stroke-width="1.9"/><path d="M14.4 14.6 L19.8 19.8" stroke="#607D8B" stroke-width="1.7" stroke-linecap="round"/><path d="M7 9.9 H12.4 M9.7 7.2 V12.6" stroke="#607D8B" stroke-width="0.9"/></svg>
<svg style="left:866px;top:364.8px;" width="24" height="24" viewBox="0 0 24 24"><path d="M17.1 5.9 V18.7 L7.4 12.3 Z" fill="none" stroke="#607D8B" stroke-width="1.7" stroke-linejoin="miter"/></svg>
<svg style="left:866px;top:408.8px;" width="24" height="24" viewBox="0 0 24 24"><circle cx="12" cy="12.1" r="6.35" fill="none" stroke="#607D8B" stroke-width="1.6"/></svg>
<svg style="left:866px;top:452.8px;" width="24" height="24" viewBox="0 0 24 24"><rect x="5.6" y="5.8" width="12.7" height="12.7" rx="1.3" fill="none" stroke="#607D8B" stroke-width="1.6"/></svg>
<svg style="left:866px;top:496.8px;" width="24" height="24" viewBox="0 0 24 24"><circle cx="5.8" cy="12" r="2" fill="#607D8B"/><circle cx="12" cy="12" r="2" fill="#607D8B"/><circle cx="17.9" cy="12" r="2" fill="#607D8B"/></svg>
<div style="left:0px;top:0px;width:2px;height:889px;background:#3A2E31;background:linear-gradient(180deg,#2B3A42 0%,#2D3A41 24%,#5C4240 29%,#6A423E 35%,#67403C 52%,#4E3030 72%,#33272A 86%,#2A2A36 96%,#2A2A38 100%);"></div>
<div style="left:2px;top:0px;width:1px;height:889px;background:#DDE0EC;"></div>
<div style="left:1395px;top:0px;width:1px;height:889px;background:#DEE0EC;"></div>
<div style="left:1395.8px;top:0px;width:1.2px;height:889px;background:#4A3A3A;background:linear-gradient(180deg,#5E4B47 0%,#54443F 9%,#303B43 18%,#2F3A42 36%,#46584F 45%,#56625F 55%,#686B6B 70%,#6C6C6C 100%);"></div>
<div style="left:0px;top:889px;width:1397px;height:1px;background:#C9CCDB;"></div>
<div style="left:0px;top:890px;width:1397px;height:1px;background:#78675F;"></div>
</div></body></html>
